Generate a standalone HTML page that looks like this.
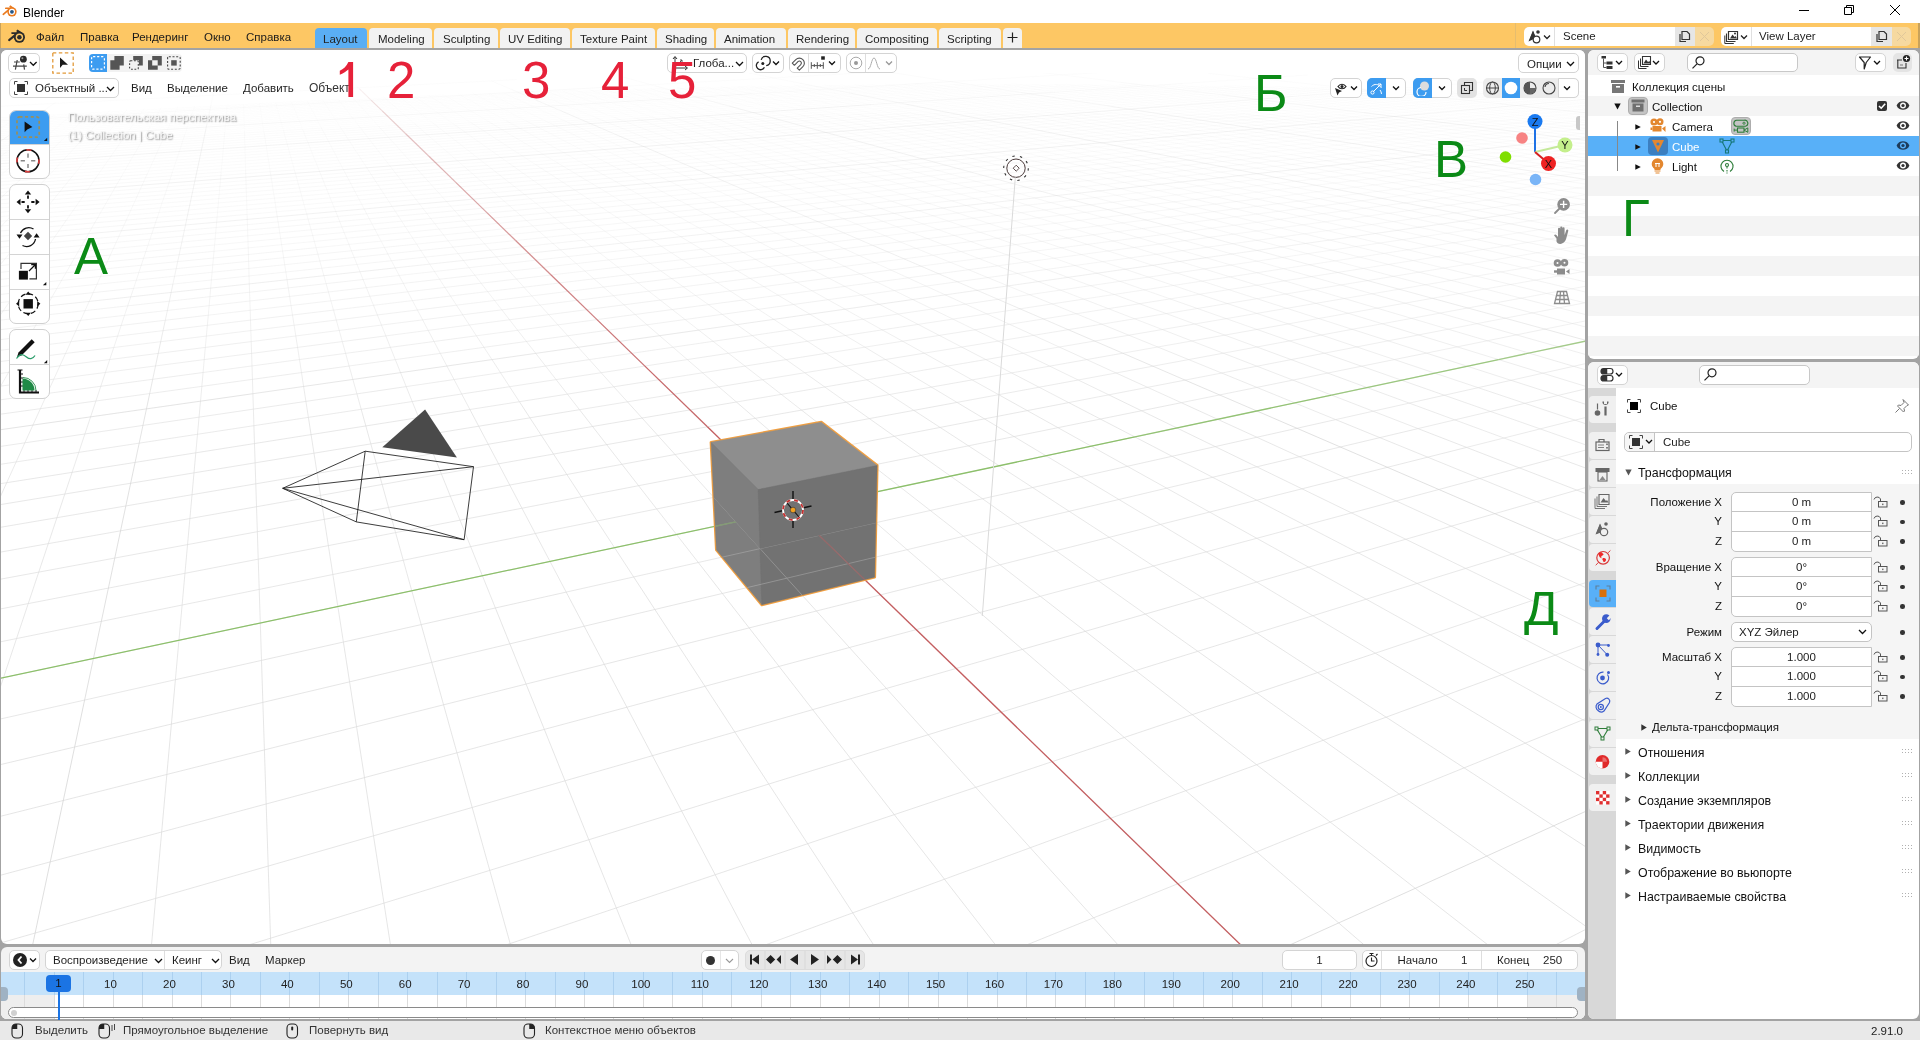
<!DOCTYPE html>
<html><head><meta charset="utf-8">
<style>
*{box-sizing:border-box;margin:0;padding:0}
html,body{width:1920px;height:1040px;overflow:hidden;will-change:transform;background:#a3a3a3;font-family:"Liberation Sans",sans-serif;font-size:11.5px;color:#000}
.a{position:absolute}
.t{position:absolute;white-space:pre;line-height:1}
#title{left:0;top:0;width:1920px;height:23px;background:#fff}
#menubar{left:0;top:23px;width:1920px;height:25px;background:#fdc764}
#vp{left:1px;top:50px;width:1584px;height:894px;background:#ffffff;border-radius:6px;overflow:hidden}
#outl{left:1588px;top:50px;width:331px;height:309px;background:#fff;border-radius:6px;overflow:hidden}
#props{left:1588px;top:362px;width:331px;height:657px;background:#fff;border-radius:6px;overflow:hidden}
#tl{left:1px;top:947px;width:1584px;height:72px;background:#f3f3f3;border-radius:6px;overflow:hidden}
#status{left:0;top:1021px;width:1920px;height:19px;background:#e9e9e9}
.tab{position:absolute;top:28px;height:20px;background:#f2f2f2;border-radius:4px 4px 0 0;color:#222}
.tab span{position:absolute;top:6px;white-space:pre;line-height:1}
.ann{position:absolute;font-size:51px;line-height:1;white-space:pre}
.red{color:#e62139}
.btn{position:absolute;background:#fff;border:1px solid #d4d4d4;border-radius:5px}
.chev{position:absolute}
.gt{position:absolute;white-space:pre;line-height:1;color:#1f1f1f}
.grn{color:#0b8a16}
</style></head><body>
<div id="title" class="a">
  <svg class="a" style="left:0;top:0" width="20" height="20" viewBox="0 0 20 20"><path d="M9.2 6.6L10.4 5.3L14 8L11 8.6z" fill="#ea7a1e"/><rect x="5" y="7.6" width="5.6" height="1.5" rx="0.7" fill="#ea7a1e"/><path d="M3.3 14.3L8.6 9.9" stroke="#ea7a1e" stroke-width="1.7" stroke-linecap="round"/><circle cx="11.94" cy="11.86" r="4.7" fill="#ea7a1e"/><circle cx="11.94" cy="11.86" r="3.1" fill="#fff"/><circle cx="11.94" cy="11.86" r="1.9" fill="#265787"/></svg>
  <span class="t" style="left:23px;top:6.5px;font-size:12px;color:#000">Blender</span>
  <div class="a" style="left:1799px;top:10px;width:10px;height:1px;background:#000"></div>
  <svg class="a" style="left:1843px;top:4px" width="12" height="12" viewBox="0 0 12 12"><path d="M1.5 3.5h7v7h-7z M3.5 3.5V1.5h7v7h-2" fill="none" stroke="#000" stroke-width="1"/></svg>
  <svg class="a" style="left:1889px;top:4px" width="12" height="12" viewBox="0 0 12 12"><path d="M1 1L11 11M11 1L1 11" stroke="#000" stroke-width="1"/></svg>
</div>
<div id="menubar" class="a">
  <div class="a" style="left:0;top:0;width:1px;height:25px;background:#c9a25a"></div>
  <svg class="a" style="left:0;top:0" width="30" height="25" viewBox="0 0 30 25"><g transform="translate(5.19 0.09) scale(1.19)"><path d="M9.2 6.6L10.4 5.3L14 8L11 8.6z" fill="#2b2b2b"/><rect x="5" y="7.6" width="5.6" height="1.5" rx="0.7" fill="#2b2b2b"/><path d="M3.3 14.3L8.6 9.9" stroke="#2b2b2b" stroke-width="1.7" stroke-linecap="round"/><circle cx="11.94" cy="11.86" r="4.7" fill="#2b2b2b"/><circle cx="11.94" cy="11.86" r="3.1" fill="#fdc764"/><circle cx="11.94" cy="11.86" r="1.9" fill="#2b2b2b"/></g></svg>
  <span class="t" style="left:36px;top:8.5px;color:#1a1a1a">Файл</span>
  <span class="t" style="left:80px;top:8.5px;color:#1a1a1a">Правка</span>
  <span class="t" style="left:132px;top:8.5px;color:#1a1a1a">Рендеринг</span>
  <span class="t" style="left:204px;top:8.5px;color:#1a1a1a">Окно</span>
  <span class="t" style="left:246px;top:8.5px;color:#1a1a1a">Справка</span>
</div>
<div class="tab" style="left:315px;width:52px;background:#5aaef4"><span style="left:8px">Layout</span></div>
<div class="tab" style="left:369px;width:63px"><span style="left:9px">Modeling</span></div>
<div class="tab" style="left:434px;width:64px"><span style="left:9px">Sculpting</span></div>
<div class="tab" style="left:500px;width:70px"><span style="left:8px">UV Editing</span></div>
<div class="tab" style="left:572px;width:83px"><span style="left:8px">Texture Paint</span></div>
<div class="tab" style="left:657px;width:57px"><span style="left:8px">Shading</span></div>
<div class="tab" style="left:716px;width:70px"><span style="left:8px">Animation</span></div>
<div class="tab" style="left:788px;width:67px"><span style="left:8px">Rendering</span></div>
<div class="tab" style="left:857px;width:80px"><span style="left:8px">Compositing</span></div>
<div class="tab" style="left:939px;width:62px"><span style="left:8px">Scripting</span></div>
<div class="tab" style="left:1003px;width:19px"><svg class="a" style="left:4px;top:4px" width="11" height="11" viewBox="0 0 11 11"><path d="M5.5 0.5v10M0.5 5.5h10" stroke="#222" stroke-width="1.2"/></svg></div>
<div class="a" style="left:1515px;top:23px;width:1px;height:25px;background:#e6bd6e"></div>
<div class="a" style="left:1524px;top:27px;width:30px;height:19px;background:#fff;border-radius:5px 0 0 5px"></div>
<svg class="a" style="left:1527px;top:29px" width="26" height="15" viewBox="0 0 26 15"><path d="M2 12 L6 2 L8 7" fill="#333"/><path d="M1.5 12.5 L6 1.5 L9 9 Z" fill="#333"/><circle cx="11" cy="3" r="1.8" fill="#333"/><circle cx="9.5" cy="10.5" r="3.3" fill="#fff" stroke="#333" stroke-width="1.2"/><path d="M17 6.5 l3 3 l3 -3" fill="none" stroke="#222" stroke-width="1.3"/></svg>
<div class="a" style="left:1554px;top:27px;width:121px;height:19px;background:#fff;border-left:1px solid #e0e0e0"></div>
<span class="t" style="left:1563px;top:31px;color:#222">Scene</span>
<div class="a" style="left:1675px;top:27px;width:20px;height:19px;background:#e6e6e6"></div>
<svg class="a" style="left:1677px;top:29px" width="16" height="15" viewBox="0 0 16 15"><path d="M5 2.5h5l2.5 2.5v5.5h-7.5z" fill="none" stroke="#333" stroke-width="1.2"/><path d="M3 5v7.5h6" fill="none" stroke="#333" stroke-width="1.2"/></svg>
<div class="a" style="left:1695px;top:27px;width:19px;height:19px;background:#f6d9a0;border-radius:0 5px 5px 0"></div>
<svg class="a" style="left:1699px;top:31px" width="11" height="11" viewBox="0 0 11 11"><path d="M1 1L10 10M10 1L1 10" stroke="#e0c79a" stroke-width="1"/></svg>
<div class="a" style="left:1721px;top:27px;width:30px;height:19px;background:#fff;border-radius:5px 0 0 5px"></div>
<svg class="a" style="left:1724px;top:29px" width="26" height="15" viewBox="0 0 26 15"><path d="M4.5 2.5h9v8h-9z" fill="none" stroke="#333" stroke-width="1.2"/><path d="M2.5 4.5v8h9" fill="none" stroke="#333" stroke-width="1.1"/><path d="M0.8 6.5v8h9" fill="none" stroke="#333" stroke-width="1"/><path d="M6 9.5 l2.5-4 l2 2.5 l1-1 l1.5 2.5z" fill="#333"/><circle cx="11" cy="4.5" r="1" fill="#333"/><path d="M17 6.5 l3 3 l3 -3" fill="none" stroke="#222" stroke-width="1.3"/></svg>
<div class="a" style="left:1751px;top:27px;width:120px;height:19px;background:#fff;border-left:1px solid #e0e0e0"></div>
<span class="t" style="left:1759px;top:31px;color:#222">View Layer</span>
<div class="a" style="left:1871px;top:27px;width:21px;height:19px;background:#e6e6e6"></div>
<svg class="a" style="left:1874px;top:29px" width="16" height="15" viewBox="0 0 16 15"><path d="M5 2.5h5l2.5 2.5v5.5h-7.5z" fill="none" stroke="#333" stroke-width="1.2"/><path d="M3 5v7.5h6" fill="none" stroke="#333" stroke-width="1.2"/></svg>
<div class="a" style="left:1892px;top:27px;width:19px;height:19px;background:#f6d9a0;border-radius:0 5px 5px 0"></div>
<svg class="a" style="left:1896px;top:31px" width="11" height="11" viewBox="0 0 11 11"><path d="M1 1L10 10M10 1L1 10" stroke="#e0c79a" stroke-width="1"/></svg>
<div class="a" style="left:1918px;top:23px;width:2px;height:25px;background:#c9a25a"></div>

<div id="vp" class="a">
<svg class="a" style="left:-1px;top:-50px" width="1920" height="1040" viewBox="0 0 1920 1040"><defs><clipPath id="cb"><polygon points="713.8,497.4 760.1,548.7 875.9,522.7 874.7,577.2 761.8,604.8 716.4,549.9"/></clipPath></defs><g fill="none" stroke-width="1"><path stroke="#dcdcdc" stroke-opacity="0.058" d="M-19.4 118.9L338.1 99.3M-22.5 120.7L444.1 94.9M-9.5 123.3L576.0 90.3M-12.6 125.2L620.1 89.2M-15.7 127.1L663.9 88.2M-19.0 129.1L707.4 87.1M-22.3 131.1L750.6 86.1M-5.1 132.0L781.0 85.8M-8.3 134.1L811.6 85.4M-11.6 136.3L842.2 85.1M-15.0 138.5L872.9 84.8M-22.1 143.2L934.4 84.2M-25.8 145.6L965.3 83.9M184.9 134.6L984.6 84.3M321.5 128.1L1015.8 84.0M415.1 124.2L1035.5 84.4M488.6 121.6L1066.9 84.1M543.7 120.1L1087.1 84.5M598.4 118.7L1107.5 84.9M652.6 117.2L1139.4 84.6M744.0 115.4L1181.3 85.4M781.8 115.1L1202.6 85.9M835.0 113.7L1235.3 85.6M872.8 113.3L1257.1 86.0M910.7 113.0L1279.2 86.4M948.8 112.6L1301.5 86.9M972.5 113.3L1324.1 87.4M1010.9 113.0L1347.0 87.8M1049.5 112.6L1370.2 88.3M1113.1 113.0L1417.4 89.3M1138.5 113.7L1430.8 90.6M1177.9 113.4L1455.3 91.1M1203.9 114.1L1480.0 91.6M1243.8 113.8L1505.0 92.1M1270.5 114.5L1530.4 92.7M1297.6 115.3L1556.1 93.2M1325.1 116.0L1571.8 94.6M1366.1 115.7L1598.2 95.2M1423.1 117.3L1599.7 101.1M1452.3 118.1L1595.0 104.8M1481.9 118.9L1601.3 107.6M1511.9 119.7L1596.4 111.6M1542.5 120.6L1591.2 115.8M1573.5 121.4L1598.0 119.0M-0.6 117.9L-6.4 121.4M18.0 116.9L-5.1 132.0M54.7 114.9L18.6 142.8M72.7 113.9L40.4 141.5M90.6 112.9L61.9 140.1M109.8 110.3L83.1 138.8M127.1 109.4L102.3 139.8M144.2 108.4L123.3 138.5M161.2 107.5L144.1 137.1M177.9 106.6L164.6 135.9M194.6 105.7L184.9 134.6M227.2 105.4L224.8 132.1M243.5 104.5L244.4 130.8M259.7 103.6L264.0 131.7M275.7 102.7L283.4 130.5M291.5 101.9L302.6 129.3M307.2 101.0L321.5 128.1M322.7 100.1L340.2 126.9M338.1 99.3L358.7 125.7M353.4 98.5L378.8 126.5M383.5 96.8L415.1 124.2M400.0 97.3L433.0 123.1M414.8 96.5L453.4 123.9M429.5 95.7L471.1 122.7M444.1 94.9L488.6 121.6M458.5 94.1L505.9 120.5M472.8 93.3L526.6 121.2M489.5 93.8L543.7 120.1M503.7 93.0L560.6 119.0M531.6 91.4L598.4 118.7M548.6 91.9L614.9 117.6M562.4 91.1L636.3 118.3M576.0 90.3L652.6 117.2M589.5 89.6L668.8 116.1M606.7 90.0L690.4 116.9M620.1 89.2L706.3 115.8M633.4 88.5L728.3 116.5M650.7 88.9L744.0 115.4M676.9 87.4L781.8 115.1M694.4 87.9L797.3 114.0M707.4 87.1L819.8 114.7M720.2 86.4L835.0 113.7M737.9 86.8L857.8 114.4M750.6 86.1L872.8 113.3M768.5 86.5L895.9 114.0M781.0 85.8L910.7 113.0M793.5 85.0L934.1 113.7M823.9 84.7L972.5 113.3M842.2 85.1L986.9 112.3M854.4 84.4L1010.9 113.0M872.9 84.8L1035.3 113.7M884.9 84.1L1049.5 112.6M903.6 84.5L1074.2 113.4M915.5 83.8L1088.2 112.3M934.4 84.2L1113.1 113.0M953.5 84.6L1138.5 113.7M984.6 84.3L1177.9 113.4M1004.1 84.7L1203.9 114.1M1015.8 84.0L1230.3 114.9M1035.5 84.4L1243.8 113.8M1055.4 84.8L1270.5 114.5M1066.9 84.1L1297.6 115.3M1087.1 84.5L1325.1 116.0M1107.5 84.9L1338.3 114.9M1118.8 84.1L1366.1 115.7M1160.2 85.0L1423.1 117.3M1181.3 85.4L1452.3 118.1M1202.6 85.9L1481.9 118.9M1224.2 86.3L1511.9 119.7M1235.3 85.6L1542.5 120.6M1257.1 86.0L1573.5 121.4M1279.2 86.4L1605.0 122.3M1301.5 86.9L1598.0 119.0M1324.1 87.4L1591.2 115.8M1370.2 88.3L1596.4 111.6M1393.7 88.8L1607.9 110.4M1417.4 89.3L1601.3 107.6M1455.3 91.1L1595.0 104.8M1480.0 91.6L1606.0 103.8M1505.0 92.1L1599.7 101.1M1530.4 92.7L1593.7 98.6M1571.8 94.6L1604.2 97.6"/><path stroke="#dcdcdc" stroke-opacity="0.117" d="M-6.9 146.6L184.9 134.6M-10.5 149.2L321.5 128.1M-14.2 151.8L415.1 124.2M-18.0 154.5L488.6 121.6M-21.8 157.2L543.7 120.1M-25.9 160.1L598.4 118.7M-5.4 161.3L652.6 117.2M-13.2 167.4L744.0 115.4M-17.3 170.6L781.8 115.1M-21.5 173.9L835.0 113.7M-25.9 177.2L872.8 113.3M-3.5 178.8L910.7 113.0M72.2 176.6L948.8 112.6M147.1 174.3L972.5 113.3M221.2 172.1L1010.9 113.0M294.4 169.9L1049.5 112.6M415.7 167.4L1113.1 113.0M487.2 165.3L1138.5 113.7M557.9 163.1L1177.9 113.4M606.7 162.8L1203.9 114.1M655.6 162.4L1243.8 113.8M725.3 160.3L1270.5 114.5M774.3 160.0L1297.6 115.3M823.4 159.6L1325.1 116.0M892.1 157.5L1366.1 115.7M990.7 156.8L1423.1 117.3M1040.2 156.4L1452.3 118.1M1089.9 156.0L1481.9 118.9M1139.9 155.6L1511.9 119.7M1190.0 155.2L1542.5 120.6M1223.2 156.6L1573.5 121.4M1274.0 156.2L1592.6 123.6M1325.0 155.8L1599.7 127.1M1376.2 155.4L1594.1 132.1M1463.6 156.4L1595.7 141.6M18.6 142.8L-5.4 161.3M1515.8 156.0L1603.7 145.9M40.4 141.5L-3.5 178.8M1568.1 155.6L1597.6 152.2M61.9 140.1L23.1 176.9M83.1 138.8L46.0 178.5M102.3 139.8L72.2 176.6M123.3 138.5L98.1 174.7M144.1 137.1L121.6 176.2M164.6 135.9L147.1 174.3M184.9 134.6L172.3 172.5M224.8 132.1L221.2 172.1M244.4 130.8L245.6 170.3M264.0 131.7L270.3 171.8M283.4 130.5L294.4 169.9M302.6 129.3L318.2 168.1M321.5 128.1L343.4 169.6M340.2 126.9L366.8 167.8M358.7 125.7L392.5 169.2M378.8 126.5L415.7 167.4M415.1 124.2L464.7 167.0M433.0 123.1L487.2 165.3M453.4 123.9L509.4 163.5M471.1 122.7L536.1 164.9M488.6 121.6L557.9 163.1M505.9 120.5L585.1 164.5M526.6 121.2L606.7 162.8M543.7 120.1L627.9 161.1M560.6 119.0L655.6 162.4M598.4 118.7L704.7 162.1M614.9 117.6L725.3 160.3M636.3 118.3L754.0 161.7M652.6 117.2L774.3 160.0M668.8 116.1L794.3 158.2M690.4 116.9L823.4 159.6M706.3 115.8L843.1 157.9M728.3 116.5L872.7 159.2M744.0 115.4L892.1 157.5M781.8 115.1L941.3 157.1M797.3 114.0L971.9 158.5M819.8 114.7L990.7 156.8M835.0 113.7L1021.8 158.1M857.8 114.4L1040.2 156.4M872.8 113.3L1071.9 157.7M895.9 114.0L1089.9 156.0M910.7 113.0L1122.1 157.3M934.1 113.7L1139.9 155.6M972.5 113.3L1190.0 155.2M986.9 112.3L1223.2 156.6M1010.9 113.0L1240.2 154.9M1035.3 113.7L1274.0 156.2M1049.5 112.6L1290.7 154.5M1074.2 113.4L1325.0 155.8M1088.2 112.3L1341.4 154.1M1113.1 113.0L1376.2 155.4M1138.5 113.7L1411.7 156.8M1177.9 113.4L1463.6 156.4M1203.9 114.1L1479.2 154.7M1230.3 114.9L1515.8 156.0M1243.8 113.8L1531.0 154.3M1270.5 114.5L1568.1 155.6M1297.6 115.3L1606.0 157.0M1325.1 116.0L1597.6 152.2M1338.3 114.9L1612.0 150.5M1366.1 115.7L1603.7 145.9M1423.1 117.3L1609.4 140.1M1452.3 118.1L1601.6 136.0M1481.9 118.9L1594.1 132.1M1511.9 119.7L1607.1 130.7M1542.5 120.6L1599.7 127.1M1573.5 121.4L1592.6 123.6"/><path stroke="#dcdcdc" stroke-opacity="0.175" d="M-30.4 180.8L-3.5 178.8M-7.7 182.4L72.2 176.6M-12.0 186.1L147.1 174.3M-16.5 189.9L221.2 172.1M-21.2 193.9L294.4 169.9M-31.0 202.2L415.7 167.4M-5.8 204.3L487.2 165.3M-10.6 208.8L557.9 163.1M-15.5 213.5L606.7 162.8M-20.7 218.4L655.6 162.4M-26.1 223.5L725.3 160.3M66.2 220.4L774.3 160.0M157.3 217.4L823.4 159.6M247.1 214.4L892.1 157.5M423.1 208.6L990.7 156.8M509.4 205.7L1040.2 156.4M568.5 205.4L1089.9 156.0M653.5 202.6L1139.9 155.6M712.6 202.2L1190.0 155.2M772.0 201.9L1223.2 156.6M855.5 199.1L1274.0 156.2M915.0 198.7L1325.0 155.8M974.7 198.4L1376.2 155.4M1095.0 197.6L1463.6 156.4M1155.5 197.3L1515.8 156.0M-3.5 178.8L-7.7 182.4M1216.3 196.9L1568.1 155.6M23.1 176.9L-5.8 204.3M1257.0 199.0L1591.1 158.8M46.0 178.5L6.4 220.7M1318.9 198.6L1599.6 164.0M72.2 176.6L34.2 223.1M1381.0 198.3L1592.8 171.4M98.1 174.7L66.2 220.4M1443.5 197.9L1601.9 177.2M121.6 176.2L97.7 217.7M1506.2 197.5L1594.8 185.6M147.1 174.3L126.3 220.1M1551.1 199.7L1604.5 192.3M172.3 172.5L157.3 217.4M221.2 172.1L217.1 217.1M245.6 170.3L247.1 214.4M270.3 171.8L276.5 211.8M294.4 169.9L306.7 214.1M318.2 168.1L335.7 211.5M343.4 169.6L364.1 208.9M366.8 167.8L395.2 211.2M392.5 169.2L423.1 208.6M415.7 167.4L450.6 206.1M464.7 167.0L509.4 205.7M487.2 165.3L541.9 207.9M509.4 163.5L568.5 205.4M536.1 164.9L594.6 202.9M557.9 163.1L627.8 205.1M585.1 164.5L653.5 202.6M606.7 162.8L687.5 204.7M627.9 161.1L712.6 202.2M655.6 162.4L737.4 199.8M704.7 162.1L796.3 199.4M725.3 160.3L831.7 201.5M754.0 161.7L855.5 199.1M774.3 160.0L891.6 201.2M794.3 158.2L915.0 198.7M823.4 159.6L951.8 200.8M843.1 157.9L974.7 198.4M872.7 159.2L1012.3 200.5M892.1 157.5L1034.7 198.0M941.3 157.1L1095.0 197.6M971.9 158.5L1134.1 199.7M990.7 156.8L1155.5 197.3M1021.8 158.1L1195.4 199.4M1040.2 156.4L1216.3 196.9M1071.9 157.7L1257.0 199.0M1089.9 156.0L1277.4 196.5M1122.1 157.3L1318.9 198.6M1139.9 155.6L1338.8 196.2M1190.0 155.2L1424.3 200.4M1223.2 156.6L1443.5 197.9M1240.2 154.9L1487.5 200.0M1274.0 156.2L1506.2 197.5M1290.7 154.5L1551.1 199.7M1325.0 155.8L1569.2 197.1M1341.4 154.1L1614.9 199.3M1376.2 155.4L1604.5 192.3M1411.7 156.8L1594.8 185.6M1463.6 156.4L1601.9 177.2M1479.2 154.7L1592.8 171.4M1515.8 156.0L1608.6 169.4M1531.0 154.3L1599.6 164.0M1568.1 155.6L1591.1 158.8"/><path stroke="#dcdcdc" stroke-opacity="0.233" d="M-31.7 228.8L66.2 220.4M-37.5 234.3L157.3 217.4M-8.8 237.0L247.1 214.4M-20.1 249.1L423.1 208.6M-26.2 255.6L509.4 205.7M5.1 258.8L568.5 205.4M110.4 255.0L653.5 202.6M214.0 251.3L712.6 202.2M316.1 247.7L772.0 201.9M416.6 244.1L855.5 199.1M484.6 243.8L915.0 198.7M583.4 240.2L974.7 198.4M748.5 236.4L1095.0 197.6M816.7 236.1L1155.5 197.3M885.3 235.8L1216.3 196.9M954.2 235.4L1257.0 199.0M6.4 220.7L-8.8 237.0M1023.5 235.1L1318.9 198.6M34.2 223.1L5.1 258.8M1093.1 234.8L1381.0 198.3M66.2 220.4L41.9 255.3M1163.1 234.5L1443.5 197.9M97.7 217.7L74.2 258.5M1233.5 234.1L1506.2 197.5M126.3 220.1L110.4 255.0M1304.2 233.8L1551.1 199.7M157.3 217.4L145.8 251.6M1424.8 236.4L1607.5 209.5M217.1 217.1L214.0 251.3M1497.3 236.1L1599.5 220.5M247.1 214.4L248.2 247.9M1570.2 235.7L1590.8 232.5M276.5 211.8L282.6 251.0M306.7 214.1L316.1 247.7M335.7 211.5L348.9 244.4M364.1 208.9L384.4 247.4M395.2 211.2L416.6 244.1M423.1 208.6L453.0 247.1M450.6 206.1L484.6 243.8M509.4 205.7L553.0 243.5M541.9 207.9L583.4 240.2M568.5 205.4L613.1 237.0M594.6 202.9L651.5 239.9M627.8 205.1L680.7 236.7M653.5 202.6L720.0 239.6M687.5 204.7L748.5 236.4M712.6 202.2L788.8 239.3M737.4 199.8L816.7 236.1M796.3 199.4L885.3 235.8M831.7 201.5L912.0 232.6M855.5 199.1L954.2 235.4M891.6 201.2L980.3 232.3M915.0 198.7L1023.5 235.1M951.8 200.8L1048.9 232.0M974.7 198.4L1093.1 234.8M1012.3 200.5L1117.9 231.6M1034.7 198.0L1163.1 234.5M1095.0 197.6L1233.5 234.1M1134.1 199.7L1280.8 237.1M1155.5 197.3L1304.2 233.8M1195.4 199.4L1352.6 236.7M1216.3 196.9L1375.3 233.5M1257.0 199.0L1424.8 236.4M1277.4 196.5L1446.7 233.2M1318.9 198.6L1497.3 236.1M1338.8 196.2L1518.6 232.8M1424.3 200.4L1590.8 232.5M1443.5 197.9L1611.0 229.3M1487.5 200.0L1599.5 220.5M1506.2 197.5L1618.8 217.6M1551.1 199.7L1607.5 209.5M1569.2 197.1L1597.0 201.8"/><path stroke="#dcdcdc" stroke-opacity="0.292" d="M-32.5 262.3L5.1 258.8M-39.2 269.4L110.4 255.0M-6.5 273.0L214.0 251.3M-12.8 280.7L316.1 247.7M-19.4 288.7L416.6 244.1M15.8 292.8L484.6 243.8M133.6 288.3L583.4 240.2M363.1 279.5L748.5 236.4M474.9 275.2L816.7 236.1M551.1 275.0L885.3 235.8M660.7 270.8L954.2 235.4M737.0 270.5L1023.5 235.1M5.1 258.8L-6.5 273.0M813.7 270.3L1093.1 234.8M41.9 255.3L15.8 292.8M920.9 266.1L1163.1 234.5M74.2 258.5L56.9 288.5M997.7 265.8L1233.5 234.1M110.4 255.0L93.2 292.6M1075.0 265.5L1304.2 233.8M145.8 251.6L133.6 288.3M1230.8 265.0L1424.8 236.4M214.0 251.3L210.7 288.1M1283.5 268.7L1497.3 236.1M248.2 247.9L249.3 283.9M1363.4 268.4L1570.2 235.7M282.6 251.0L287.0 279.7M1443.8 268.1L1602.5 242.1M316.1 247.7L326.1 283.7M1524.6 267.9L1593.2 256.2M348.9 244.4L363.1 279.5M1582.9 271.7L1606.0 267.6M384.4 247.4L399.2 275.5M416.6 244.1L439.6 279.3M453.0 247.1L474.9 275.2M484.6 243.8L509.5 271.3M553.0 243.5L584.9 271.0M583.4 240.2L627.7 274.7M613.1 237.0L660.7 270.8M651.5 239.9L704.8 274.5M680.7 236.7L737.0 270.5M720.0 239.6L768.6 266.6M748.5 236.4L813.7 270.3M788.8 239.3L844.5 266.3M816.7 236.1L890.9 270.0M885.3 235.8L968.5 269.7M912.0 232.6L997.7 265.8M954.2 235.4L1046.6 269.5M980.3 232.3L1075.0 265.5M1023.5 235.1L1125.1 269.2M1048.9 232.0L1152.7 265.3M1093.1 234.8L1204.1 268.9M1117.9 231.6L1230.8 265.0M1163.1 234.5L1283.5 268.7M1233.5 234.1L1363.4 268.4M1280.8 237.1L1388.5 264.4M1304.2 233.8L1443.8 268.1M1352.6 236.7L1500.7 271.9M1375.3 233.5L1524.6 267.9M1424.8 236.4L1582.9 271.7M1446.7 233.2L1606.0 267.6M1497.3 236.1L1593.2 256.2M1518.6 232.8L1615.0 252.5"/><path stroke="#dcdcdc" stroke-opacity="0.350" d="M-26.3 297.2L15.8 292.8M-33.6 306.2L133.6 288.3M-49.5 325.7L363.1 279.5M80.6 320.4L474.9 275.2M208.3 315.2L551.1 275.0M333.5 310.1L660.7 270.8M456.5 305.2L737.0 270.5M540.0 305.0L813.7 270.3M15.8 292.8L-3.5 320.5M660.2 300.1L920.9 266.1M56.9 288.5L35.5 325.6M743.9 299.9L997.7 265.8M93.2 292.6L80.6 320.4M828.0 299.7L1075.0 265.5M133.6 288.3L124.5 315.4M998.0 299.3L1230.8 265.0M210.7 288.1L208.3 315.2M1083.7 299.1L1283.5 268.7M249.3 283.9L250.2 310.3M1170.1 298.9L1363.4 268.4M287.0 279.7L292.5 315.1M1256.9 298.7L1443.8 268.1M326.1 283.7L333.5 310.1M1344.4 298.5L1524.6 267.9M363.1 279.5L373.5 305.3M1432.4 298.3L1582.9 271.7M399.2 275.5L417.4 310.0M1521.0 298.2L1596.0 284.3M439.6 279.3L456.5 305.2M1584.9 302.8L1610.1 297.9M474.9 275.2L501.8 309.8M509.5 271.3L540.0 305.0M584.9 271.0L624.0 304.8M627.7 274.7L660.2 300.1M660.7 270.8L708.5 304.6M704.8 274.5L743.9 299.9M737.0 270.5L778.3 295.3M768.6 266.6L828.0 299.7M813.7 270.3L861.6 295.1M844.5 266.3L912.7 299.5M890.9 270.0L945.3 294.9M968.5 269.7L1029.6 294.7M997.7 265.8L1083.7 299.1M1046.6 269.5L1114.4 294.5M1075.0 265.5L1170.1 298.9M1125.1 269.2L1199.7 294.3M1152.7 265.3L1256.9 298.7M1204.1 268.9L1285.6 294.0M1230.8 265.0L1344.4 298.5M1283.5 268.7L1372.1 293.8M1363.4 268.4L1494.7 303.0M1388.5 264.4L1521.0 298.2M1443.8 268.1L1584.9 302.8M1500.7 271.9L1610.1 297.9M1524.6 267.9L1596.0 284.3M1582.9 271.7L1619.8 279.9"/><path stroke="#dcdcdc" stroke-opacity="0.408" d="M-10.7 330.9L80.6 320.4M-18.4 341.8L208.3 315.2M-26.5 353.5L333.5 310.1M113.8 347.5L456.5 305.2M251.2 341.6L540.0 305.0M-3.5 320.5L-10.7 330.9M385.8 335.9L660.2 300.1M35.5 325.6L22.9 347.5M476.4 335.8L743.9 299.9M80.6 320.4L65.5 353.5M607.9 330.2L828.0 299.7M124.5 315.4L113.8 347.5M827.1 324.5L998.0 299.3M208.3 315.2L205.3 347.5M918.1 324.4L1083.7 299.1M250.2 310.3L251.2 341.6M1009.6 324.3L1170.1 298.9M292.5 315.1L295.8 336.0M1101.8 324.2L1256.9 298.7M333.5 310.1L342.3 341.6M1194.7 324.0L1344.4 298.5M373.5 305.3L385.8 335.9M1288.2 323.9L1432.4 298.3M417.4 310.0L428.2 330.4M1352.2 329.3L1521.0 298.2M456.5 305.2L476.4 335.8M1448.2 329.2L1584.9 302.8M501.8 309.8L517.7 330.3M1544.9 329.1L1599.4 318.1M540.0 305.0L567.7 335.7M624.0 304.8L647.0 324.8M660.2 300.1L698.7 330.1M708.5 304.6L736.8 324.6M743.9 299.9L790.1 330.0M778.3 295.3L827.1 324.5M828.0 299.7L882.2 329.9M861.6 295.1L918.1 324.4M912.7 299.5L974.9 329.8M945.3 294.9L1009.6 324.3M1029.6 294.7L1101.8 324.2M1083.7 299.1L1162.3 329.5M1114.4 294.5L1194.7 324.0M1170.1 298.9L1256.9 329.4M1199.7 294.3L1288.2 323.9M1256.9 298.7L1352.2 329.3M1285.6 294.0L1382.3 323.8M1344.4 298.5L1448.2 329.2M1372.1 293.8L1477.1 323.7M1494.7 303.0L1615.2 334.8M1521.0 298.2L1599.4 318.1M1584.9 302.8L1625.5 312.8"/><path stroke="#dcdcdc" stroke-opacity="0.467" d="M-35.1 365.9L113.8 347.5M-44.4 379.1L251.2 341.6M53.8 379.2L385.8 335.9M22.9 347.5L0.6 386.2M203.1 372.5L476.4 335.8M65.5 353.5L53.8 379.2M349.1 366.0L607.9 330.2M113.8 347.5L105.4 372.5M589.3 359.6L827.1 324.5M205.3 347.5L203.1 372.5M728.5 353.3L918.1 324.4M251.2 341.6L252.0 366.0M826.0 353.3L1009.6 324.3M295.8 336.0L301.5 372.6M924.2 353.2L1101.8 324.2M342.3 341.6L349.1 366.0M1023.2 353.2L1194.7 324.0M385.8 335.9L395.3 359.6M1122.8 353.2L1288.2 323.9M428.2 330.4L446.9 366.0M1223.3 353.2L1352.2 329.3M476.4 335.8L492.0 359.6M1324.4 353.2L1448.2 329.2M517.7 330.3L535.7 353.3M1426.4 353.1L1544.9 329.1M567.7 335.7L589.3 359.6M647.0 324.8L687.3 359.6M698.7 330.1L728.5 353.3M736.8 324.6L786.1 359.6M790.1 330.0L826.0 353.3M827.1 324.5L864.8 347.1M882.2 329.9L924.2 353.2M918.1 324.4L961.8 347.1M974.9 329.8L1023.2 353.2M1009.6 324.3L1059.4 347.1M1101.8 324.2L1157.8 347.0M1162.3 329.5L1223.3 353.2M1194.7 324.0L1256.9 347.0M1256.9 329.4L1324.4 353.2M1288.2 323.9L1394.5 359.6M1352.2 329.3L1426.4 353.1M1382.3 323.8L1498.6 359.6M1448.2 329.2L1529.0 353.1M1477.1 323.7L1603.5 359.6"/><path stroke="#dcdcdc" stroke-opacity="0.525" d="M-54.2 393.3L53.8 379.2M0.6 386.2L-7.9 400.9M-7.9 400.9L203.1 372.5M53.8 379.2L40.4 408.7M95.9 401.0L349.1 366.0M105.4 372.5L95.9 401.0M406.2 386.6L589.3 359.6M203.1 372.5L200.5 401.2M509.6 386.7L728.5 353.3M252.0 366.0L252.9 393.7M658.9 379.7L826.0 353.3M301.5 372.6L303.6 386.5M762.5 379.7L924.2 353.2M349.1 366.0L356.9 393.8M866.9 379.8L1023.2 353.2M395.3 359.6L406.2 386.6M972.1 379.9L1122.8 353.2M446.9 366.0L461.7 394.0M1078.2 380.0L1223.3 353.2M492.0 359.6L509.6 386.7M1185.1 380.1L1324.4 353.2M535.7 353.3L556.1 379.6M1292.9 380.1L1426.4 353.1M589.3 359.6L613.8 386.8M1511.0 380.3L1603.5 359.6M687.3 359.6L718.9 386.9M728.5 353.3L762.5 379.7M786.1 359.6L804.8 372.8M826.0 353.3L866.9 379.8M864.8 347.1L907.7 372.9M924.2 353.2L972.1 379.9M961.8 347.1L1011.5 372.9M1023.2 353.2L1078.2 380.0M1059.4 347.1L1116.1 373.0M1157.8 347.0L1221.6 373.0M1223.3 353.2L1292.9 380.1M1256.9 347.0L1327.8 373.1M1324.4 353.2L1401.5 380.2M1394.5 359.6L1478.2 387.7M1426.4 353.1L1511.0 380.3M1498.6 359.6L1590.3 387.8M1529.0 353.1L1621.4 380.4"/><path stroke="#dcdcdc" stroke-opacity="0.583" d="M40.4 408.7L6.7 482.7M-16.9 416.6L95.9 401.0M95.9 401.0L72.1 472.3M-37.3 452.0L406.2 386.6M200.5 401.2L195.8 452.8M-48.7 471.8L509.6 386.7M252.9 393.7L253.9 425.7M-61.2 493.4L6.7 482.7M469.9 409.5L658.9 379.7M303.6 386.5L308.4 417.4M579.5 409.7L762.5 379.7M356.9 393.8L361.2 409.3M736.4 402.0L866.9 379.8M406.2 386.6L418.7 417.6M846.2 402.2L972.1 379.9M461.7 394.0L469.9 409.5M957.0 402.4L1078.2 380.0M509.6 386.7L519.4 401.7M1068.7 402.6L1185.1 380.1M556.1 379.6L579.5 409.7M1181.3 402.7L1292.9 380.1M613.8 386.8L627.5 401.9M1335.7 419.6L1511.0 380.3M718.9 386.9L736.4 402.0M1418.0 428.6L1590.3 387.8M762.5 379.7L801.5 410.1M1466.6 447.4L1608.7 411.7M804.8 372.8L846.2 402.2M1557.4 457.7L1594.0 447.8M866.9 379.8L913.9 410.4M907.7 372.9L957.0 402.4M972.1 379.9L998.7 394.7M1011.5 372.9L1068.7 402.6M1078.2 380.0L1108.7 394.8M1116.1 373.0L1181.3 402.7M1221.6 373.0L1335.7 419.6M1292.9 380.1L1418.0 428.6M1327.8 373.1L1557.4 457.7M1401.5 380.2L1594.0 447.8M1478.2 387.7L1629.4 438.4M1511.0 380.3L1608.7 411.7"/><path stroke="#dcdcdc" stroke-opacity="0.642" d="M6.7 482.7L-14.8 529.9M72.1 472.3L-11.2 721.6M195.8 452.8L175.4 679.7M253.9 425.7L261.5 660.4M6.7 482.7L469.9 409.5M308.4 417.4L343.4 642.1M-74.7 516.9L579.5 409.7M361.2 409.3L421.2 624.6M-14.8 529.9L736.4 402.0M418.7 417.6L495.4 608.0M-27.1 557.0L846.2 402.2M469.9 409.5L566.2 592.1M-40.7 586.8L957.0 402.4M519.4 401.7L633.7 577.0M-55.7 619.8L1068.7 402.6M579.5 409.7L698.3 562.5M-72.5 656.6L1181.3 402.7M627.5 401.9L786.8 578.2M-11.2 721.6L175.4 679.7M566.2 592.1L1335.7 419.6M736.4 402.0L941.6 579.5M786.8 578.2L1418.0 428.6M801.5 410.1L1040.4 596.3M941.6 579.5L1466.6 447.4M846.2 402.2L1145.3 614.1M1040.4 596.3L1557.4 457.7M913.9 410.4L1256.7 633.1M1202.3 597.7L1615.5 479.0M957.0 402.4L1375.3 653.2M1256.7 633.1L1599.0 527.1M998.7 394.7L1582.9 719.8M1375.3 653.2L1624.5 569.6M1068.7 402.6L1637.3 697.7M1501.9 674.7L1605.9 636.6M1108.7 394.8L1605.9 636.6M1582.9 719.8L1637.3 697.7M1181.3 402.7L1654.1 618.9M1335.7 419.6L1599.0 527.1M1418.0 428.6L1639.8 514.5M1557.4 457.7L1615.5 479.0"/><path stroke="#dcdcdc" stroke-opacity="0.700" d="M175.4 679.7L148.7 975.9M261.5 660.4L273.3 1023.1M343.4 642.1L396.2 981.8M421.2 624.6L534.2 1029.7M495.4 608.0L648.5 987.8M566.2 592.1L800.5 1036.5M633.7 577.0L905.6 993.9M698.3 562.5L1003.0 954.5M786.8 578.2L1167.9 1000.1M175.4 679.7L566.2 592.1M941.6 579.5L1435.3 1006.5M-27.8 771.3L786.8 578.2M1040.4 596.3L1514.7 965.8M-46.8 828.2L941.6 579.5M1145.3 614.1L1708.0 1012.9M-68.7 893.8L1040.4 596.3M1256.7 633.1L1656.8 893.0M-94.2 970.2L1202.3 597.7M1375.3 653.2L1616.1 797.6M148.7 975.9L1256.7 633.1M1582.9 719.8L1674.9 771.0M396.2 981.8L1375.3 653.2M648.5 987.8L1501.9 674.7M1003.0 954.5L1582.9 719.8M1514.7 965.8L1656.8 893.0"/><path stroke="#d4d4d4" stroke-opacity="0.062" d="M-14.1 107.0L516.8 79.6M612.4 86.9L885.9 71.6M950.7 81.6L1113.5 71.7M1182.4 83.5L1307.6 75.0M1393.7 88.8L1505.3 80.2M55.9 102.1L36.5 115.9M213.6 92.8L211.0 104.8M356.1 85.5L367.1 96.3M491.5 80.9L512.1 89.7M620.9 76.4L655.4 85.9M749.3 73.1L800.1 83.2M885.9 71.6L950.7 81.6M1031.1 71.0L1120.8 82.3M1208.0 73.3L1334.9 86.6M1425.0 77.9L1592.5 92.8"/><path stroke="#d4d4d4" stroke-opacity="0.125" d="M-6.4 121.4L612.4 86.9M751.3 93.8L950.7 81.6M1054.8 92.2L1182.4 83.5M1292.8 96.5L1393.7 88.8M1527.7 104.5L1593.7 98.6M36.5 115.9L18.3 128.8M211.0 104.8L208.7 115.9M367.1 96.3L377.3 106.2M512.1 89.7L536.2 100.2M655.4 85.9L686.7 94.4M800.1 83.2L848.8 92.8M950.7 81.6L1021.4 92.5M1120.8 82.3L1222.0 94.9M1334.9 86.6L1500.2 103.8"/><path stroke="#d4d4d4" stroke-opacity="0.188" d="M-18.5 140.8L751.3 93.8M870.9 104.6L1054.8 92.2M1169.1 106.1L1292.8 96.5M1419.9 114.2L1527.7 104.5M18.3 128.8L-3.5 144.2M208.7 115.9L205.9 129.1M377.3 106.2L389.3 117.8M536.2 100.2L561.1 110.9M686.7 94.4L729.0 106.0M848.8 92.8L906.7 104.3M1021.4 92.5L1107.5 105.8M1222.0 94.9L1364.1 112.7M1500.2 103.8L1603.1 114.6"/><path stroke="#d4d4d4" stroke-opacity="0.250" d="M-9.2 164.3L870.9 104.6M859.5 129.9L1169.1 106.1M1197.1 134.2L1419.9 114.2M1488.9 148.3L1601.6 136.0M-3.5 144.2L-6.9 146.6M205.9 129.1L199.7 158.3M389.3 117.8L415.4 143.2M561.1 110.9L615.3 134.3M729.0 106.0L817.6 130.2M906.7 104.3L1039.7 130.6M1107.5 105.8L1319.1 138.3M1364.1 112.7L1595.7 141.6"/><path stroke="#d4d4d4" stroke-opacity="0.312" d="M-26.0 198.0L859.5 129.9M-14.3 242.9L1197.1 134.2M395.2 267.9L1488.9 148.3M1206.0 257.7L1597.0 201.8M199.7 158.3L172.9 284.1M415.4 143.2L528.8 253.3M615.3 134.3L872.6 245.3M817.6 130.2L1309.4 264.7M1039.7 130.6L1602.5 242.1M1319.1 138.3L1611.6 183.4"/><path stroke="#d4d4d4" stroke-opacity="0.375" d="M-41.3 315.7L395.2 267.9M912.7 299.5L1206.0 257.7M172.9 284.1L165.3 320.3M528.8 253.3L577.1 300.3M872.6 245.3L998.0 299.3M1309.4 264.7L1432.4 298.3"/><path stroke="#d4d4d4" stroke-opacity="0.438" d="M698.7 330.1L912.7 299.5M165.3 320.3L160.7 341.7M577.1 300.3L607.9 330.2M998.0 299.3L1068.3 329.7M1432.4 298.3L1544.9 329.1"/><path stroke="#d4d4d4" stroke-opacity="0.500" d="M492.0 359.6L698.7 330.1M160.7 341.7L152.7 379.3M1529.0 353.1L1615.2 334.8M607.9 330.2L631.7 353.3M1068.3 329.7L1122.8 353.2M1544.9 329.1L1632.5 353.1"/><path stroke="#d4d4d4" stroke-opacity="0.562" d="M252.9 393.7L492.0 359.6M152.7 379.3L149.7 393.6M1401.5 380.2L1529.0 353.1M631.7 353.3L658.9 379.7M1122.8 353.2L1185.1 380.1"/><path stroke="#d4d4d4" stroke-opacity="0.625" d="M-26.7 433.6L252.9 393.7M149.7 393.6L135.1 462.4M1256.9 411.0L1401.5 380.2M658.9 379.7L690.0 409.9M1185.1 380.1L1256.9 411.0"/><path stroke="#d4d4d4" stroke-opacity="0.688" d="M135.1 462.4L84.6 700.1M-91.2 697.8L1256.9 411.0M690.0 409.9L848.3 563.7M1256.9 411.0L1624.5 569.6"/><path stroke="#d4d4d4" stroke-opacity="0.750" d="M84.6 700.1L17.4 1016.6M848.3 563.7L1256.4 960.1M1256.4 960.1L1616.1 797.6"/></g><g fill="none" stroke-width="1.3"><path stroke="#c45e60" stroke-opacity="0.083" d="M359.5 88.9L371.3 100.4"/><path stroke="#c45e60" stroke-opacity="0.167" d="M371.3 100.4L382.2 110.9"/><path stroke="#c45e60" stroke-opacity="0.250" d="M382.2 110.9L405.7 133.8"/><path stroke="#c45e60" stroke-opacity="0.333" d="M405.7 133.8L429.2 156.5"/><path stroke="#c45e60" stroke-opacity="0.417" d="M429.2 156.5L456.3 182.9"/><path stroke="#c45e60" stroke-opacity="0.500" d="M456.3 182.9L487.4 213.1"/><path stroke="#c45e60" stroke-opacity="0.583" d="M487.4 213.1L515.6 240.5"/><path stroke="#c45e60" stroke-opacity="0.667" d="M515.6 240.5L551.1 275.0"/><path stroke="#c45e60" stroke-opacity="0.750" d="M551.1 275.0L597.0 319.6"/><path stroke="#c45e60" stroke-opacity="0.833" d="M597.0 319.6L644.9 366.1"/><path stroke="#c45e60" stroke-opacity="0.917" d="M644.9 366.1L707.4 426.8"/><path stroke="#c45e60" stroke-opacity="1.000" d="M707.4 426.8L1256.4 960.1"/><path stroke="#8cc06a" stroke-opacity="0.750" d="M1498.6 359.6L1615.2 334.8"/><path stroke="#8cc06a" stroke-opacity="0.833" d="M1331.5 395.1L1498.6 359.6"/><path stroke="#8cc06a" stroke-opacity="0.917" d="M1134.9 436.9L1331.5 395.1"/><path stroke="#8cc06a" stroke-opacity="1.000" d="M-91.2 697.8L1134.9 436.9"/></g><polygon points="716.4,549.9 711.0,442.3 821.3,422.2 877.2,465.4 874.7,577.2 761.8,604.8" fill="#787878" stroke="#f3a040" stroke-width="2.8" stroke-linejoin="round"/><polygon points="711.0,442.3 758.2,489.5 877.2,465.4 821.3,422.2" fill="#8e8e8e" stroke="#8e8e8e" stroke-width="0.4"/><polygon points="711.0,442.3 758.2,489.5 761.8,604.8 716.4,549.9" fill="#7e7e7e" stroke="#7e7e7e" stroke-width="0.4"/><polygon points="758.2,489.5 877.2,465.4 874.7,577.2 761.8,604.8" fill="#727272" stroke="#727272" stroke-width="0.4"/><g clip-path="url(#cb)" opacity="0.45"><g fill="none" stroke-width="1"><path stroke="#dcdcdc" stroke-opacity="0.058" d="M-19.4 118.9L338.1 99.3M-22.5 120.7L444.1 94.9M-9.5 123.3L576.0 90.3M-12.6 125.2L620.1 89.2M-15.7 127.1L663.9 88.2M-19.0 129.1L707.4 87.1M-22.3 131.1L750.6 86.1M-5.1 132.0L781.0 85.8M-8.3 134.1L811.6 85.4M-11.6 136.3L842.2 85.1M-15.0 138.5L872.9 84.8M-22.1 143.2L934.4 84.2M-25.8 145.6L965.3 83.9M184.9 134.6L984.6 84.3M321.5 128.1L1015.8 84.0M415.1 124.2L1035.5 84.4M488.6 121.6L1066.9 84.1M543.7 120.1L1087.1 84.5M598.4 118.7L1107.5 84.9M652.6 117.2L1139.4 84.6M744.0 115.4L1181.3 85.4M781.8 115.1L1202.6 85.9M835.0 113.7L1235.3 85.6M872.8 113.3L1257.1 86.0M910.7 113.0L1279.2 86.4M948.8 112.6L1301.5 86.9M972.5 113.3L1324.1 87.4M1010.9 113.0L1347.0 87.8M1049.5 112.6L1370.2 88.3M1113.1 113.0L1417.4 89.3M1138.5 113.7L1430.8 90.6M1177.9 113.4L1455.3 91.1M1203.9 114.1L1480.0 91.6M1243.8 113.8L1505.0 92.1M1270.5 114.5L1530.4 92.7M1297.6 115.3L1556.1 93.2M1325.1 116.0L1571.8 94.6M1366.1 115.7L1598.2 95.2M1423.1 117.3L1599.7 101.1M1452.3 118.1L1595.0 104.8M1481.9 118.9L1601.3 107.6M1511.9 119.7L1596.4 111.6M1542.5 120.6L1591.2 115.8M1573.5 121.4L1598.0 119.0M-0.6 117.9L-6.4 121.4M18.0 116.9L-5.1 132.0M54.7 114.9L18.6 142.8M72.7 113.9L40.4 141.5M90.6 112.9L61.9 140.1M109.8 110.3L83.1 138.8M127.1 109.4L102.3 139.8M144.2 108.4L123.3 138.5M161.2 107.5L144.1 137.1M177.9 106.6L164.6 135.9M194.6 105.7L184.9 134.6M227.2 105.4L224.8 132.1M243.5 104.5L244.4 130.8M259.7 103.6L264.0 131.7M275.7 102.7L283.4 130.5M291.5 101.9L302.6 129.3M307.2 101.0L321.5 128.1M322.7 100.1L340.2 126.9M338.1 99.3L358.7 125.7M353.4 98.5L378.8 126.5M383.5 96.8L415.1 124.2M400.0 97.3L433.0 123.1M414.8 96.5L453.4 123.9M429.5 95.7L471.1 122.7M444.1 94.9L488.6 121.6M458.5 94.1L505.9 120.5M472.8 93.3L526.6 121.2M489.5 93.8L543.7 120.1M503.7 93.0L560.6 119.0M531.6 91.4L598.4 118.7M548.6 91.9L614.9 117.6M562.4 91.1L636.3 118.3M576.0 90.3L652.6 117.2M589.5 89.6L668.8 116.1M606.7 90.0L690.4 116.9M620.1 89.2L706.3 115.8M633.4 88.5L728.3 116.5M650.7 88.9L744.0 115.4M676.9 87.4L781.8 115.1M694.4 87.9L797.3 114.0M707.4 87.1L819.8 114.7M720.2 86.4L835.0 113.7M737.9 86.8L857.8 114.4M750.6 86.1L872.8 113.3M768.5 86.5L895.9 114.0M781.0 85.8L910.7 113.0M793.5 85.0L934.1 113.7M823.9 84.7L972.5 113.3M842.2 85.1L986.9 112.3M854.4 84.4L1010.9 113.0M872.9 84.8L1035.3 113.7M884.9 84.1L1049.5 112.6M903.6 84.5L1074.2 113.4M915.5 83.8L1088.2 112.3M934.4 84.2L1113.1 113.0M953.5 84.6L1138.5 113.7M984.6 84.3L1177.9 113.4M1004.1 84.7L1203.9 114.1M1015.8 84.0L1230.3 114.9M1035.5 84.4L1243.8 113.8M1055.4 84.8L1270.5 114.5M1066.9 84.1L1297.6 115.3M1087.1 84.5L1325.1 116.0M1107.5 84.9L1338.3 114.9M1118.8 84.1L1366.1 115.7M1160.2 85.0L1423.1 117.3M1181.3 85.4L1452.3 118.1M1202.6 85.9L1481.9 118.9M1224.2 86.3L1511.9 119.7M1235.3 85.6L1542.5 120.6M1257.1 86.0L1573.5 121.4M1279.2 86.4L1605.0 122.3M1301.5 86.9L1598.0 119.0M1324.1 87.4L1591.2 115.8M1370.2 88.3L1596.4 111.6M1393.7 88.8L1607.9 110.4M1417.4 89.3L1601.3 107.6M1455.3 91.1L1595.0 104.8M1480.0 91.6L1606.0 103.8M1505.0 92.1L1599.7 101.1M1530.4 92.7L1593.7 98.6M1571.8 94.6L1604.2 97.6"/><path stroke="#dcdcdc" stroke-opacity="0.117" d="M-6.9 146.6L184.9 134.6M-10.5 149.2L321.5 128.1M-14.2 151.8L415.1 124.2M-18.0 154.5L488.6 121.6M-21.8 157.2L543.7 120.1M-25.9 160.1L598.4 118.7M-5.4 161.3L652.6 117.2M-13.2 167.4L744.0 115.4M-17.3 170.6L781.8 115.1M-21.5 173.9L835.0 113.7M-25.9 177.2L872.8 113.3M-3.5 178.8L910.7 113.0M72.2 176.6L948.8 112.6M147.1 174.3L972.5 113.3M221.2 172.1L1010.9 113.0M294.4 169.9L1049.5 112.6M415.7 167.4L1113.1 113.0M487.2 165.3L1138.5 113.7M557.9 163.1L1177.9 113.4M606.7 162.8L1203.9 114.1M655.6 162.4L1243.8 113.8M725.3 160.3L1270.5 114.5M774.3 160.0L1297.6 115.3M823.4 159.6L1325.1 116.0M892.1 157.5L1366.1 115.7M990.7 156.8L1423.1 117.3M1040.2 156.4L1452.3 118.1M1089.9 156.0L1481.9 118.9M1139.9 155.6L1511.9 119.7M1190.0 155.2L1542.5 120.6M1223.2 156.6L1573.5 121.4M1274.0 156.2L1592.6 123.6M1325.0 155.8L1599.7 127.1M1376.2 155.4L1594.1 132.1M1463.6 156.4L1595.7 141.6M18.6 142.8L-5.4 161.3M1515.8 156.0L1603.7 145.9M40.4 141.5L-3.5 178.8M1568.1 155.6L1597.6 152.2M61.9 140.1L23.1 176.9M83.1 138.8L46.0 178.5M102.3 139.8L72.2 176.6M123.3 138.5L98.1 174.7M144.1 137.1L121.6 176.2M164.6 135.9L147.1 174.3M184.9 134.6L172.3 172.5M224.8 132.1L221.2 172.1M244.4 130.8L245.6 170.3M264.0 131.7L270.3 171.8M283.4 130.5L294.4 169.9M302.6 129.3L318.2 168.1M321.5 128.1L343.4 169.6M340.2 126.9L366.8 167.8M358.7 125.7L392.5 169.2M378.8 126.5L415.7 167.4M415.1 124.2L464.7 167.0M433.0 123.1L487.2 165.3M453.4 123.9L509.4 163.5M471.1 122.7L536.1 164.9M488.6 121.6L557.9 163.1M505.9 120.5L585.1 164.5M526.6 121.2L606.7 162.8M543.7 120.1L627.9 161.1M560.6 119.0L655.6 162.4M598.4 118.7L704.7 162.1M614.9 117.6L725.3 160.3M636.3 118.3L754.0 161.7M652.6 117.2L774.3 160.0M668.8 116.1L794.3 158.2M690.4 116.9L823.4 159.6M706.3 115.8L843.1 157.9M728.3 116.5L872.7 159.2M744.0 115.4L892.1 157.5M781.8 115.1L941.3 157.1M797.3 114.0L971.9 158.5M819.8 114.7L990.7 156.8M835.0 113.7L1021.8 158.1M857.8 114.4L1040.2 156.4M872.8 113.3L1071.9 157.7M895.9 114.0L1089.9 156.0M910.7 113.0L1122.1 157.3M934.1 113.7L1139.9 155.6M972.5 113.3L1190.0 155.2M986.9 112.3L1223.2 156.6M1010.9 113.0L1240.2 154.9M1035.3 113.7L1274.0 156.2M1049.5 112.6L1290.7 154.5M1074.2 113.4L1325.0 155.8M1088.2 112.3L1341.4 154.1M1113.1 113.0L1376.2 155.4M1138.5 113.7L1411.7 156.8M1177.9 113.4L1463.6 156.4M1203.9 114.1L1479.2 154.7M1230.3 114.9L1515.8 156.0M1243.8 113.8L1531.0 154.3M1270.5 114.5L1568.1 155.6M1297.6 115.3L1606.0 157.0M1325.1 116.0L1597.6 152.2M1338.3 114.9L1612.0 150.5M1366.1 115.7L1603.7 145.9M1423.1 117.3L1609.4 140.1M1452.3 118.1L1601.6 136.0M1481.9 118.9L1594.1 132.1M1511.9 119.7L1607.1 130.7M1542.5 120.6L1599.7 127.1M1573.5 121.4L1592.6 123.6"/><path stroke="#dcdcdc" stroke-opacity="0.175" d="M-30.4 180.8L-3.5 178.8M-7.7 182.4L72.2 176.6M-12.0 186.1L147.1 174.3M-16.5 189.9L221.2 172.1M-21.2 193.9L294.4 169.9M-31.0 202.2L415.7 167.4M-5.8 204.3L487.2 165.3M-10.6 208.8L557.9 163.1M-15.5 213.5L606.7 162.8M-20.7 218.4L655.6 162.4M-26.1 223.5L725.3 160.3M66.2 220.4L774.3 160.0M157.3 217.4L823.4 159.6M247.1 214.4L892.1 157.5M423.1 208.6L990.7 156.8M509.4 205.7L1040.2 156.4M568.5 205.4L1089.9 156.0M653.5 202.6L1139.9 155.6M712.6 202.2L1190.0 155.2M772.0 201.9L1223.2 156.6M855.5 199.1L1274.0 156.2M915.0 198.7L1325.0 155.8M974.7 198.4L1376.2 155.4M1095.0 197.6L1463.6 156.4M1155.5 197.3L1515.8 156.0M-3.5 178.8L-7.7 182.4M1216.3 196.9L1568.1 155.6M23.1 176.9L-5.8 204.3M1257.0 199.0L1591.1 158.8M46.0 178.5L6.4 220.7M1318.9 198.6L1599.6 164.0M72.2 176.6L34.2 223.1M1381.0 198.3L1592.8 171.4M98.1 174.7L66.2 220.4M1443.5 197.9L1601.9 177.2M121.6 176.2L97.7 217.7M1506.2 197.5L1594.8 185.6M147.1 174.3L126.3 220.1M1551.1 199.7L1604.5 192.3M172.3 172.5L157.3 217.4M221.2 172.1L217.1 217.1M245.6 170.3L247.1 214.4M270.3 171.8L276.5 211.8M294.4 169.9L306.7 214.1M318.2 168.1L335.7 211.5M343.4 169.6L364.1 208.9M366.8 167.8L395.2 211.2M392.5 169.2L423.1 208.6M415.7 167.4L450.6 206.1M464.7 167.0L509.4 205.7M487.2 165.3L541.9 207.9M509.4 163.5L568.5 205.4M536.1 164.9L594.6 202.9M557.9 163.1L627.8 205.1M585.1 164.5L653.5 202.6M606.7 162.8L687.5 204.7M627.9 161.1L712.6 202.2M655.6 162.4L737.4 199.8M704.7 162.1L796.3 199.4M725.3 160.3L831.7 201.5M754.0 161.7L855.5 199.1M774.3 160.0L891.6 201.2M794.3 158.2L915.0 198.7M823.4 159.6L951.8 200.8M843.1 157.9L974.7 198.4M872.7 159.2L1012.3 200.5M892.1 157.5L1034.7 198.0M941.3 157.1L1095.0 197.6M971.9 158.5L1134.1 199.7M990.7 156.8L1155.5 197.3M1021.8 158.1L1195.4 199.4M1040.2 156.4L1216.3 196.9M1071.9 157.7L1257.0 199.0M1089.9 156.0L1277.4 196.5M1122.1 157.3L1318.9 198.6M1139.9 155.6L1338.8 196.2M1190.0 155.2L1424.3 200.4M1223.2 156.6L1443.5 197.9M1240.2 154.9L1487.5 200.0M1274.0 156.2L1506.2 197.5M1290.7 154.5L1551.1 199.7M1325.0 155.8L1569.2 197.1M1341.4 154.1L1614.9 199.3M1376.2 155.4L1604.5 192.3M1411.7 156.8L1594.8 185.6M1463.6 156.4L1601.9 177.2M1479.2 154.7L1592.8 171.4M1515.8 156.0L1608.6 169.4M1531.0 154.3L1599.6 164.0M1568.1 155.6L1591.1 158.8"/><path stroke="#dcdcdc" stroke-opacity="0.233" d="M-31.7 228.8L66.2 220.4M-37.5 234.3L157.3 217.4M-8.8 237.0L247.1 214.4M-20.1 249.1L423.1 208.6M-26.2 255.6L509.4 205.7M5.1 258.8L568.5 205.4M110.4 255.0L653.5 202.6M214.0 251.3L712.6 202.2M316.1 247.7L772.0 201.9M416.6 244.1L855.5 199.1M484.6 243.8L915.0 198.7M583.4 240.2L974.7 198.4M748.5 236.4L1095.0 197.6M816.7 236.1L1155.5 197.3M885.3 235.8L1216.3 196.9M954.2 235.4L1257.0 199.0M6.4 220.7L-8.8 237.0M1023.5 235.1L1318.9 198.6M34.2 223.1L5.1 258.8M1093.1 234.8L1381.0 198.3M66.2 220.4L41.9 255.3M1163.1 234.5L1443.5 197.9M97.7 217.7L74.2 258.5M1233.5 234.1L1506.2 197.5M126.3 220.1L110.4 255.0M1304.2 233.8L1551.1 199.7M157.3 217.4L145.8 251.6M1424.8 236.4L1607.5 209.5M217.1 217.1L214.0 251.3M1497.3 236.1L1599.5 220.5M247.1 214.4L248.2 247.9M1570.2 235.7L1590.8 232.5M276.5 211.8L282.6 251.0M306.7 214.1L316.1 247.7M335.7 211.5L348.9 244.4M364.1 208.9L384.4 247.4M395.2 211.2L416.6 244.1M423.1 208.6L453.0 247.1M450.6 206.1L484.6 243.8M509.4 205.7L553.0 243.5M541.9 207.9L583.4 240.2M568.5 205.4L613.1 237.0M594.6 202.9L651.5 239.9M627.8 205.1L680.7 236.7M653.5 202.6L720.0 239.6M687.5 204.7L748.5 236.4M712.6 202.2L788.8 239.3M737.4 199.8L816.7 236.1M796.3 199.4L885.3 235.8M831.7 201.5L912.0 232.6M855.5 199.1L954.2 235.4M891.6 201.2L980.3 232.3M915.0 198.7L1023.5 235.1M951.8 200.8L1048.9 232.0M974.7 198.4L1093.1 234.8M1012.3 200.5L1117.9 231.6M1034.7 198.0L1163.1 234.5M1095.0 197.6L1233.5 234.1M1134.1 199.7L1280.8 237.1M1155.5 197.3L1304.2 233.8M1195.4 199.4L1352.6 236.7M1216.3 196.9L1375.3 233.5M1257.0 199.0L1424.8 236.4M1277.4 196.5L1446.7 233.2M1318.9 198.6L1497.3 236.1M1338.8 196.2L1518.6 232.8M1424.3 200.4L1590.8 232.5M1443.5 197.9L1611.0 229.3M1487.5 200.0L1599.5 220.5M1506.2 197.5L1618.8 217.6M1551.1 199.7L1607.5 209.5M1569.2 197.1L1597.0 201.8"/><path stroke="#dcdcdc" stroke-opacity="0.292" d="M-32.5 262.3L5.1 258.8M-39.2 269.4L110.4 255.0M-6.5 273.0L214.0 251.3M-12.8 280.7L316.1 247.7M-19.4 288.7L416.6 244.1M15.8 292.8L484.6 243.8M133.6 288.3L583.4 240.2M363.1 279.5L748.5 236.4M474.9 275.2L816.7 236.1M551.1 275.0L885.3 235.8M660.7 270.8L954.2 235.4M737.0 270.5L1023.5 235.1M5.1 258.8L-6.5 273.0M813.7 270.3L1093.1 234.8M41.9 255.3L15.8 292.8M920.9 266.1L1163.1 234.5M74.2 258.5L56.9 288.5M997.7 265.8L1233.5 234.1M110.4 255.0L93.2 292.6M1075.0 265.5L1304.2 233.8M145.8 251.6L133.6 288.3M1230.8 265.0L1424.8 236.4M214.0 251.3L210.7 288.1M1283.5 268.7L1497.3 236.1M248.2 247.9L249.3 283.9M1363.4 268.4L1570.2 235.7M282.6 251.0L287.0 279.7M1443.8 268.1L1602.5 242.1M316.1 247.7L326.1 283.7M1524.6 267.9L1593.2 256.2M348.9 244.4L363.1 279.5M1582.9 271.7L1606.0 267.6M384.4 247.4L399.2 275.5M416.6 244.1L439.6 279.3M453.0 247.1L474.9 275.2M484.6 243.8L509.5 271.3M553.0 243.5L584.9 271.0M583.4 240.2L627.7 274.7M613.1 237.0L660.7 270.8M651.5 239.9L704.8 274.5M680.7 236.7L737.0 270.5M720.0 239.6L768.6 266.6M748.5 236.4L813.7 270.3M788.8 239.3L844.5 266.3M816.7 236.1L890.9 270.0M885.3 235.8L968.5 269.7M912.0 232.6L997.7 265.8M954.2 235.4L1046.6 269.5M980.3 232.3L1075.0 265.5M1023.5 235.1L1125.1 269.2M1048.9 232.0L1152.7 265.3M1093.1 234.8L1204.1 268.9M1117.9 231.6L1230.8 265.0M1163.1 234.5L1283.5 268.7M1233.5 234.1L1363.4 268.4M1280.8 237.1L1388.5 264.4M1304.2 233.8L1443.8 268.1M1352.6 236.7L1500.7 271.9M1375.3 233.5L1524.6 267.9M1424.8 236.4L1582.9 271.7M1446.7 233.2L1606.0 267.6M1497.3 236.1L1593.2 256.2M1518.6 232.8L1615.0 252.5"/><path stroke="#dcdcdc" stroke-opacity="0.350" d="M-26.3 297.2L15.8 292.8M-33.6 306.2L133.6 288.3M-49.5 325.7L363.1 279.5M80.6 320.4L474.9 275.2M208.3 315.2L551.1 275.0M333.5 310.1L660.7 270.8M456.5 305.2L737.0 270.5M540.0 305.0L813.7 270.3M15.8 292.8L-3.5 320.5M660.2 300.1L920.9 266.1M56.9 288.5L35.5 325.6M743.9 299.9L997.7 265.8M93.2 292.6L80.6 320.4M828.0 299.7L1075.0 265.5M133.6 288.3L124.5 315.4M998.0 299.3L1230.8 265.0M210.7 288.1L208.3 315.2M1083.7 299.1L1283.5 268.7M249.3 283.9L250.2 310.3M1170.1 298.9L1363.4 268.4M287.0 279.7L292.5 315.1M1256.9 298.7L1443.8 268.1M326.1 283.7L333.5 310.1M1344.4 298.5L1524.6 267.9M363.1 279.5L373.5 305.3M1432.4 298.3L1582.9 271.7M399.2 275.5L417.4 310.0M1521.0 298.2L1596.0 284.3M439.6 279.3L456.5 305.2M1584.9 302.8L1610.1 297.9M474.9 275.2L501.8 309.8M509.5 271.3L540.0 305.0M584.9 271.0L624.0 304.8M627.7 274.7L660.2 300.1M660.7 270.8L708.5 304.6M704.8 274.5L743.9 299.9M737.0 270.5L778.3 295.3M768.6 266.6L828.0 299.7M813.7 270.3L861.6 295.1M844.5 266.3L912.7 299.5M890.9 270.0L945.3 294.9M968.5 269.7L1029.6 294.7M997.7 265.8L1083.7 299.1M1046.6 269.5L1114.4 294.5M1075.0 265.5L1170.1 298.9M1125.1 269.2L1199.7 294.3M1152.7 265.3L1256.9 298.7M1204.1 268.9L1285.6 294.0M1230.8 265.0L1344.4 298.5M1283.5 268.7L1372.1 293.8M1363.4 268.4L1494.7 303.0M1388.5 264.4L1521.0 298.2M1443.8 268.1L1584.9 302.8M1500.7 271.9L1610.1 297.9M1524.6 267.9L1596.0 284.3M1582.9 271.7L1619.8 279.9"/><path stroke="#dcdcdc" stroke-opacity="0.408" d="M-10.7 330.9L80.6 320.4M-18.4 341.8L208.3 315.2M-26.5 353.5L333.5 310.1M113.8 347.5L456.5 305.2M251.2 341.6L540.0 305.0M-3.5 320.5L-10.7 330.9M385.8 335.9L660.2 300.1M35.5 325.6L22.9 347.5M476.4 335.8L743.9 299.9M80.6 320.4L65.5 353.5M607.9 330.2L828.0 299.7M124.5 315.4L113.8 347.5M827.1 324.5L998.0 299.3M208.3 315.2L205.3 347.5M918.1 324.4L1083.7 299.1M250.2 310.3L251.2 341.6M1009.6 324.3L1170.1 298.9M292.5 315.1L295.8 336.0M1101.8 324.2L1256.9 298.7M333.5 310.1L342.3 341.6M1194.7 324.0L1344.4 298.5M373.5 305.3L385.8 335.9M1288.2 323.9L1432.4 298.3M417.4 310.0L428.2 330.4M1352.2 329.3L1521.0 298.2M456.5 305.2L476.4 335.8M1448.2 329.2L1584.9 302.8M501.8 309.8L517.7 330.3M1544.9 329.1L1599.4 318.1M540.0 305.0L567.7 335.7M624.0 304.8L647.0 324.8M660.2 300.1L698.7 330.1M708.5 304.6L736.8 324.6M743.9 299.9L790.1 330.0M778.3 295.3L827.1 324.5M828.0 299.7L882.2 329.9M861.6 295.1L918.1 324.4M912.7 299.5L974.9 329.8M945.3 294.9L1009.6 324.3M1029.6 294.7L1101.8 324.2M1083.7 299.1L1162.3 329.5M1114.4 294.5L1194.7 324.0M1170.1 298.9L1256.9 329.4M1199.7 294.3L1288.2 323.9M1256.9 298.7L1352.2 329.3M1285.6 294.0L1382.3 323.8M1344.4 298.5L1448.2 329.2M1372.1 293.8L1477.1 323.7M1494.7 303.0L1615.2 334.8M1521.0 298.2L1599.4 318.1M1584.9 302.8L1625.5 312.8"/><path stroke="#dcdcdc" stroke-opacity="0.467" d="M-35.1 365.9L113.8 347.5M-44.4 379.1L251.2 341.6M53.8 379.2L385.8 335.9M22.9 347.5L0.6 386.2M203.1 372.5L476.4 335.8M65.5 353.5L53.8 379.2M349.1 366.0L607.9 330.2M113.8 347.5L105.4 372.5M589.3 359.6L827.1 324.5M205.3 347.5L203.1 372.5M728.5 353.3L918.1 324.4M251.2 341.6L252.0 366.0M826.0 353.3L1009.6 324.3M295.8 336.0L301.5 372.6M924.2 353.2L1101.8 324.2M342.3 341.6L349.1 366.0M1023.2 353.2L1194.7 324.0M385.8 335.9L395.3 359.6M1122.8 353.2L1288.2 323.9M428.2 330.4L446.9 366.0M1223.3 353.2L1352.2 329.3M476.4 335.8L492.0 359.6M1324.4 353.2L1448.2 329.2M517.7 330.3L535.7 353.3M1426.4 353.1L1544.9 329.1M567.7 335.7L589.3 359.6M647.0 324.8L687.3 359.6M698.7 330.1L728.5 353.3M736.8 324.6L786.1 359.6M790.1 330.0L826.0 353.3M827.1 324.5L864.8 347.1M882.2 329.9L924.2 353.2M918.1 324.4L961.8 347.1M974.9 329.8L1023.2 353.2M1009.6 324.3L1059.4 347.1M1101.8 324.2L1157.8 347.0M1162.3 329.5L1223.3 353.2M1194.7 324.0L1256.9 347.0M1256.9 329.4L1324.4 353.2M1288.2 323.9L1394.5 359.6M1352.2 329.3L1426.4 353.1M1382.3 323.8L1498.6 359.6M1448.2 329.2L1529.0 353.1M1477.1 323.7L1603.5 359.6"/><path stroke="#dcdcdc" stroke-opacity="0.525" d="M-54.2 393.3L53.8 379.2M0.6 386.2L-7.9 400.9M-7.9 400.9L203.1 372.5M53.8 379.2L40.4 408.7M95.9 401.0L349.1 366.0M105.4 372.5L95.9 401.0M406.2 386.6L589.3 359.6M203.1 372.5L200.5 401.2M509.6 386.7L728.5 353.3M252.0 366.0L252.9 393.7M658.9 379.7L826.0 353.3M301.5 372.6L303.6 386.5M762.5 379.7L924.2 353.2M349.1 366.0L356.9 393.8M866.9 379.8L1023.2 353.2M395.3 359.6L406.2 386.6M972.1 379.9L1122.8 353.2M446.9 366.0L461.7 394.0M1078.2 380.0L1223.3 353.2M492.0 359.6L509.6 386.7M1185.1 380.1L1324.4 353.2M535.7 353.3L556.1 379.6M1292.9 380.1L1426.4 353.1M589.3 359.6L613.8 386.8M1511.0 380.3L1603.5 359.6M687.3 359.6L718.9 386.9M728.5 353.3L762.5 379.7M786.1 359.6L804.8 372.8M826.0 353.3L866.9 379.8M864.8 347.1L907.7 372.9M924.2 353.2L972.1 379.9M961.8 347.1L1011.5 372.9M1023.2 353.2L1078.2 380.0M1059.4 347.1L1116.1 373.0M1157.8 347.0L1221.6 373.0M1223.3 353.2L1292.9 380.1M1256.9 347.0L1327.8 373.1M1324.4 353.2L1401.5 380.2M1394.5 359.6L1478.2 387.7M1426.4 353.1L1511.0 380.3M1498.6 359.6L1590.3 387.8M1529.0 353.1L1621.4 380.4"/><path stroke="#dcdcdc" stroke-opacity="0.583" d="M40.4 408.7L6.7 482.7M-16.9 416.6L95.9 401.0M95.9 401.0L72.1 472.3M-37.3 452.0L406.2 386.6M200.5 401.2L195.8 452.8M-48.7 471.8L509.6 386.7M252.9 393.7L253.9 425.7M-61.2 493.4L6.7 482.7M469.9 409.5L658.9 379.7M303.6 386.5L308.4 417.4M579.5 409.7L762.5 379.7M356.9 393.8L361.2 409.3M736.4 402.0L866.9 379.8M406.2 386.6L418.7 417.6M846.2 402.2L972.1 379.9M461.7 394.0L469.9 409.5M957.0 402.4L1078.2 380.0M509.6 386.7L519.4 401.7M1068.7 402.6L1185.1 380.1M556.1 379.6L579.5 409.7M1181.3 402.7L1292.9 380.1M613.8 386.8L627.5 401.9M1335.7 419.6L1511.0 380.3M718.9 386.9L736.4 402.0M1418.0 428.6L1590.3 387.8M762.5 379.7L801.5 410.1M1466.6 447.4L1608.7 411.7M804.8 372.8L846.2 402.2M1557.4 457.7L1594.0 447.8M866.9 379.8L913.9 410.4M907.7 372.9L957.0 402.4M972.1 379.9L998.7 394.7M1011.5 372.9L1068.7 402.6M1078.2 380.0L1108.7 394.8M1116.1 373.0L1181.3 402.7M1221.6 373.0L1335.7 419.6M1292.9 380.1L1418.0 428.6M1327.8 373.1L1557.4 457.7M1401.5 380.2L1594.0 447.8M1478.2 387.7L1629.4 438.4M1511.0 380.3L1608.7 411.7"/><path stroke="#dcdcdc" stroke-opacity="0.642" d="M6.7 482.7L-14.8 529.9M72.1 472.3L-11.2 721.6M195.8 452.8L175.4 679.7M253.9 425.7L261.5 660.4M6.7 482.7L469.9 409.5M308.4 417.4L343.4 642.1M-74.7 516.9L579.5 409.7M361.2 409.3L421.2 624.6M-14.8 529.9L736.4 402.0M418.7 417.6L495.4 608.0M-27.1 557.0L846.2 402.2M469.9 409.5L566.2 592.1M-40.7 586.8L957.0 402.4M519.4 401.7L633.7 577.0M-55.7 619.8L1068.7 402.6M579.5 409.7L698.3 562.5M-72.5 656.6L1181.3 402.7M627.5 401.9L786.8 578.2M-11.2 721.6L175.4 679.7M566.2 592.1L1335.7 419.6M736.4 402.0L941.6 579.5M786.8 578.2L1418.0 428.6M801.5 410.1L1040.4 596.3M941.6 579.5L1466.6 447.4M846.2 402.2L1145.3 614.1M1040.4 596.3L1557.4 457.7M913.9 410.4L1256.7 633.1M1202.3 597.7L1615.5 479.0M957.0 402.4L1375.3 653.2M1256.7 633.1L1599.0 527.1M998.7 394.7L1582.9 719.8M1375.3 653.2L1624.5 569.6M1068.7 402.6L1637.3 697.7M1501.9 674.7L1605.9 636.6M1108.7 394.8L1605.9 636.6M1582.9 719.8L1637.3 697.7M1181.3 402.7L1654.1 618.9M1335.7 419.6L1599.0 527.1M1418.0 428.6L1639.8 514.5M1557.4 457.7L1615.5 479.0"/><path stroke="#dcdcdc" stroke-opacity="0.700" d="M175.4 679.7L148.7 975.9M261.5 660.4L273.3 1023.1M343.4 642.1L396.2 981.8M421.2 624.6L534.2 1029.7M495.4 608.0L648.5 987.8M566.2 592.1L800.5 1036.5M633.7 577.0L905.6 993.9M698.3 562.5L1003.0 954.5M786.8 578.2L1167.9 1000.1M175.4 679.7L566.2 592.1M941.6 579.5L1435.3 1006.5M-27.8 771.3L786.8 578.2M1040.4 596.3L1514.7 965.8M-46.8 828.2L941.6 579.5M1145.3 614.1L1708.0 1012.9M-68.7 893.8L1040.4 596.3M1256.7 633.1L1656.8 893.0M-94.2 970.2L1202.3 597.7M1375.3 653.2L1616.1 797.6M148.7 975.9L1256.7 633.1M1582.9 719.8L1674.9 771.0M396.2 981.8L1375.3 653.2M648.5 987.8L1501.9 674.7M1003.0 954.5L1582.9 719.8M1514.7 965.8L1656.8 893.0"/><path stroke="#d4d4d4" stroke-opacity="0.062" d="M-14.1 107.0L516.8 79.6M612.4 86.9L885.9 71.6M950.7 81.6L1113.5 71.7M1182.4 83.5L1307.6 75.0M1393.7 88.8L1505.3 80.2M55.9 102.1L36.5 115.9M213.6 92.8L211.0 104.8M356.1 85.5L367.1 96.3M491.5 80.9L512.1 89.7M620.9 76.4L655.4 85.9M749.3 73.1L800.1 83.2M885.9 71.6L950.7 81.6M1031.1 71.0L1120.8 82.3M1208.0 73.3L1334.9 86.6M1425.0 77.9L1592.5 92.8"/><path stroke="#d4d4d4" stroke-opacity="0.125" d="M-6.4 121.4L612.4 86.9M751.3 93.8L950.7 81.6M1054.8 92.2L1182.4 83.5M1292.8 96.5L1393.7 88.8M1527.7 104.5L1593.7 98.6M36.5 115.9L18.3 128.8M211.0 104.8L208.7 115.9M367.1 96.3L377.3 106.2M512.1 89.7L536.2 100.2M655.4 85.9L686.7 94.4M800.1 83.2L848.8 92.8M950.7 81.6L1021.4 92.5M1120.8 82.3L1222.0 94.9M1334.9 86.6L1500.2 103.8"/><path stroke="#d4d4d4" stroke-opacity="0.188" d="M-18.5 140.8L751.3 93.8M870.9 104.6L1054.8 92.2M1169.1 106.1L1292.8 96.5M1419.9 114.2L1527.7 104.5M18.3 128.8L-3.5 144.2M208.7 115.9L205.9 129.1M377.3 106.2L389.3 117.8M536.2 100.2L561.1 110.9M686.7 94.4L729.0 106.0M848.8 92.8L906.7 104.3M1021.4 92.5L1107.5 105.8M1222.0 94.9L1364.1 112.7M1500.2 103.8L1603.1 114.6"/><path stroke="#d4d4d4" stroke-opacity="0.250" d="M-9.2 164.3L870.9 104.6M859.5 129.9L1169.1 106.1M1197.1 134.2L1419.9 114.2M1488.9 148.3L1601.6 136.0M-3.5 144.2L-6.9 146.6M205.9 129.1L199.7 158.3M389.3 117.8L415.4 143.2M561.1 110.9L615.3 134.3M729.0 106.0L817.6 130.2M906.7 104.3L1039.7 130.6M1107.5 105.8L1319.1 138.3M1364.1 112.7L1595.7 141.6"/><path stroke="#d4d4d4" stroke-opacity="0.312" d="M-26.0 198.0L859.5 129.9M-14.3 242.9L1197.1 134.2M395.2 267.9L1488.9 148.3M1206.0 257.7L1597.0 201.8M199.7 158.3L172.9 284.1M415.4 143.2L528.8 253.3M615.3 134.3L872.6 245.3M817.6 130.2L1309.4 264.7M1039.7 130.6L1602.5 242.1M1319.1 138.3L1611.6 183.4"/><path stroke="#d4d4d4" stroke-opacity="0.375" d="M-41.3 315.7L395.2 267.9M912.7 299.5L1206.0 257.7M172.9 284.1L165.3 320.3M528.8 253.3L577.1 300.3M872.6 245.3L998.0 299.3M1309.4 264.7L1432.4 298.3"/><path stroke="#d4d4d4" stroke-opacity="0.438" d="M698.7 330.1L912.7 299.5M165.3 320.3L160.7 341.7M577.1 300.3L607.9 330.2M998.0 299.3L1068.3 329.7M1432.4 298.3L1544.9 329.1"/><path stroke="#d4d4d4" stroke-opacity="0.500" d="M492.0 359.6L698.7 330.1M160.7 341.7L152.7 379.3M1529.0 353.1L1615.2 334.8M607.9 330.2L631.7 353.3M1068.3 329.7L1122.8 353.2M1544.9 329.1L1632.5 353.1"/><path stroke="#d4d4d4" stroke-opacity="0.562" d="M252.9 393.7L492.0 359.6M152.7 379.3L149.7 393.6M1401.5 380.2L1529.0 353.1M631.7 353.3L658.9 379.7M1122.8 353.2L1185.1 380.1"/><path stroke="#d4d4d4" stroke-opacity="0.625" d="M-26.7 433.6L252.9 393.7M149.7 393.6L135.1 462.4M1256.9 411.0L1401.5 380.2M658.9 379.7L690.0 409.9M1185.1 380.1L1256.9 411.0"/><path stroke="#d4d4d4" stroke-opacity="0.688" d="M135.1 462.4L84.6 700.1M-91.2 697.8L1256.9 411.0M690.0 409.9L848.3 563.7M1256.9 411.0L1624.5 569.6"/><path stroke="#d4d4d4" stroke-opacity="0.750" d="M84.6 700.1L17.4 1016.6M848.3 563.7L1256.4 960.1M1256.4 960.1L1616.1 797.6"/></g><g fill="none" stroke-width="1.3"><path stroke="#c45e60" stroke-opacity="0.083" d="M359.5 88.9L371.3 100.4"/><path stroke="#c45e60" stroke-opacity="0.167" d="M371.3 100.4L382.2 110.9"/><path stroke="#c45e60" stroke-opacity="0.250" d="M382.2 110.9L405.7 133.8"/><path stroke="#c45e60" stroke-opacity="0.333" d="M405.7 133.8L429.2 156.5"/><path stroke="#c45e60" stroke-opacity="0.417" d="M429.2 156.5L456.3 182.9"/><path stroke="#c45e60" stroke-opacity="0.500" d="M456.3 182.9L487.4 213.1"/><path stroke="#c45e60" stroke-opacity="0.583" d="M487.4 213.1L515.6 240.5"/><path stroke="#c45e60" stroke-opacity="0.667" d="M515.6 240.5L551.1 275.0"/><path stroke="#c45e60" stroke-opacity="0.750" d="M551.1 275.0L597.0 319.6"/><path stroke="#c45e60" stroke-opacity="0.833" d="M597.0 319.6L644.9 366.1"/><path stroke="#c45e60" stroke-opacity="0.917" d="M644.9 366.1L707.4 426.8"/><path stroke="#c45e60" stroke-opacity="1.000" d="M707.4 426.8L1256.4 960.1"/><path stroke="#8cc06a" stroke-opacity="0.750" d="M1498.6 359.6L1615.2 334.8"/><path stroke="#8cc06a" stroke-opacity="0.833" d="M1331.5 395.1L1498.6 359.6"/><path stroke="#8cc06a" stroke-opacity="0.917" d="M1134.9 436.9L1331.5 395.1"/><path stroke="#8cc06a" stroke-opacity="1.000" d="M-91.2 697.8L1134.9 436.9"/></g></g><g fill="none" stroke="#000" stroke-width="1" stroke-linejoin="round">
<path d="M282.7 488.3L365.2 451.2M282.7 488.3L473.5 466.7M282.7 488.3L464.1 539.7M282.7 488.3L356.3 521.9M365.2 451.2L473.5 466.7L464.1 539.7L356.3 521.9Z" stroke="#1a1a1a" stroke-width="0.85"/>
</g>
<path d="M382.3 447.3L425.1 409.4L456.9 457.4Z" fill="#4a4a4a"/>
<g>
<circle cx="1016" cy="168.2" r="12.3" fill="none" stroke="#333" stroke-width="1.1" stroke-dasharray="2.4 5.3"/>
<circle cx="1016" cy="168.2" r="9.2" fill="none" stroke="#4a3a3a" stroke-width="1"/>
<path d="M1016.2 165.2l3 3l-3 3l-3-3z" fill="none" stroke="#4a3a3a" stroke-width="0.9"/>
<path d="M1015.3 177.4L982.3 616" stroke="#dadada" stroke-width="1"/>
</g>
<g>
<path d="M793 491v9M793 520v8M774.5 512.5l9-2M802.5 508l9-2" stroke="#111" stroke-width="1.4"/>
<path d="M787 503l12 14" stroke="#111" stroke-width="1.1"/>
<circle cx="793" cy="510" r="10" fill="none" stroke="#fff" stroke-width="1.8"/>
<circle cx="793" cy="510" r="10" fill="none" stroke="#c43030" stroke-width="1.8" stroke-dasharray="4 4"/>
<circle cx="793" cy="510" r="2.8" fill="#f2a020" stroke="#333" stroke-width="0.6"/>
</g>
</svg>
</div>
<div id="outl" class="a">
<div class="a" style="left:0;top:0;width:331px;height:25px;background:#f4f4f4"></div>
<div class="a" style="left:0;top:25px;width:331px;height:21px;background:#ffffff"></div><div class="a" style="left:0;top:46px;width:331px;height:20px;background:#f4f4f4"></div><div class="a" style="left:0;top:66px;width:331px;height:20px;background:#ffffff"></div><div class="a" style="left:0;top:86px;width:331px;height:20px;background:#58b0f8"></div><div class="a" style="left:0;top:106px;width:331px;height:20px;background:#ffffff"></div><div class="a" style="left:0;top:126px;width:331px;height:20px;background:#f4f4f4"></div><div class="a" style="left:0;top:146px;width:331px;height:20px;background:#ffffff"></div><div class="a" style="left:0;top:166px;width:331px;height:20px;background:#f4f4f4"></div><div class="a" style="left:0;top:186px;width:331px;height:20px;background:#ffffff"></div><div class="a" style="left:0;top:206px;width:331px;height:20px;background:#f4f4f4"></div><div class="a" style="left:0;top:226px;width:331px;height:20px;background:#ffffff"></div><div class="a" style="left:0;top:246px;width:331px;height:20px;background:#f4f4f4"></div><div class="a" style="left:0;top:266px;width:331px;height:20px;background:#ffffff"></div><div class="a" style="left:0;top:286px;width:331px;height:20px;background:#f4f4f4"></div>
</div>
<div id="outlc">
<div class="btn" style="left:1597px;top:53px;width:31px;height:19px"></div>
<svg class="a" style="left:1600px;top:55px" width="26" height="15" viewBox="0 0 26 15"><rect x="1.5" y="1" width="4.5" height="2.5" fill="#333"/><path d="M3.5 3.5v9h3M3.5 8h3" fill="none" stroke="#555" stroke-width="1"/><rect x="6.5" y="6.5" width="6" height="3" fill="#333"/><rect x="6.5" y="11" width="6" height="3" fill="#333"/><path d="M16 6l3 3l3-3" fill="none" stroke="#111" stroke-width="1.3"/></svg>
<div class="btn" style="left:1634px;top:53px;width:31px;height:19px"></div>
<svg class="a" style="left:1637px;top:55px" width="26" height="15" viewBox="0 0 26 15"><path d="M5.5 1.5h8v8h-8z" fill="none" stroke="#333" stroke-width="1.1"/><path d="M3.5 3.5v8h8M1.5 5.5v8h8" fill="none" stroke="#333" stroke-width="1"/><path d="M6.5 8.5l2.5-4l2 2.5l1.5-1l1 2.5z" fill="#333"/><path d="M16 6l3 3l3-3" fill="none" stroke="#111" stroke-width="1.3"/></svg>
<div class="btn" style="left:1687px;top:53px;width:111px;height:19px;border-color:#c8c8c8"></div>
<svg class="a" style="left:1691px;top:55px" width="15" height="15" viewBox="0 0 15 15"><circle cx="9" cy="5.8" r="4" fill="none" stroke="#222" stroke-width="1.2"/><path d="M6 8.8L1.5 13.3" stroke="#222" stroke-width="1.2"/></svg>
<div class="btn" style="left:1855px;top:53px;width:31px;height:19px"></div>
<svg class="a" style="left:1858px;top:55px" width="26" height="15" viewBox="0 0 26 15"><path d="M1.5 2h11l-4.3 5.5l-2 6.5v-6.5z" fill="none" stroke="#222" stroke-width="1.2" stroke-linejoin="round"/><path d="M16 6l3 3l3-3" fill="none" stroke="#111" stroke-width="1.3"/></svg>
<div class="a" style="left:1893px;top:53px;width:19px;height:19px;background:#e4e4e4;border-radius:5px"></div>
<svg class="a" style="left:1895px;top:54px" width="16" height="16" viewBox="0 0 16 16"><path d="M2 6h5M2.8 6v8h8.2V9" fill="none" stroke="#333" stroke-width="1.1"/><path d="M5 11h3" stroke="#888" stroke-width="1.2"/><circle cx="11.5" cy="4.5" r="3.6" fill="#222"/><path d="M11.5 2.5v4M9.5 4.5h4" stroke="#fff" stroke-width="1.1"/></svg>

<svg class="a" style="left:1611px;top:80px" width="14" height="13" viewBox="0 0 14 13"><rect x="0" y="0" width="14" height="3" fill="#777"/><rect x="1" y="4" width="12" height="9" fill="#777"/><rect x="5" y="6" width="4" height="1.6" fill="#fff"/></svg>
<span class="t" style="left:1632px;top:82px;color:#111">Коллекция сцены</span>
<svg class="a" style="left:1614px;top:103px" width="7" height="7" viewBox="0 0 7 7"><path d="M0.3 0.5h6.4L3.5 6.5z" fill="#111"/></svg>
<div class="a" style="left:1628px;top:97px;width:20px;height:18px;background:#c4c4c4;border:1px solid #adadad;border-radius:4px"></div>
<svg class="a" style="left:1631px;top:99px" width="14" height="13" viewBox="0 0 14 13"><rect x="0.5" y="0.5" width="13" height="3" fill="#707070"/><rect x="1.5" y="4.5" width="11" height="8" fill="#707070"/><rect x="5" y="6.5" width="4" height="1.5" fill="#ddd"/></svg>
<span class="t" style="left:1652px;top:102px;color:#111">Collection</span>
<div class="a" style="left:1877px;top:101px;width:10px;height:10px;background:#333;border-radius:2px"></div>
<svg class="a" style="left:1877px;top:101px" width="10" height="10" viewBox="0 0 10 10"><path d="M2 5l2.2 2.2L8.2 2.8" fill="none" stroke="#fff" stroke-width="1.6"/></svg>
<svg class="a" style="left:1896px;top:99.5px" width="14" height="11" viewBox="0 0 14 11"><path d="M0.6 5.5C2.5 -0.3 11.5 -0.3 13.4 5.5C11.5 11.3 2.5 11.3 0.6 5.5z" fill="#333"/><circle cx="7" cy="5.5" r="3" fill="#f4f4f4"/><circle cx="7" cy="5.5" r="1.6" fill="#333"/></svg>
<div class="a" style="left:1617px;top:121px;width:1px;height:50px;background:#888"></div>
<svg class="a" style="left:1635px;top:124px" width="6" height="6" viewBox="0 0 6 6"><path d="M0.3 0.2v5.6L5.8 3z" fill="#111"/></svg>
<svg class="a" style="left:1650px;top:118px" width="16" height="15" viewBox="0 0 16 15"><circle cx="4" cy="4" r="3.6" fill="#e3872f"/><circle cx="10" cy="3.8" r="3.5" fill="#e3872f"/><circle cx="4" cy="4" r="1.1" fill="#fff"/><circle cx="10" cy="3.8" r="1.1" fill="#fff"/><rect x="2.5" y="8" width="9" height="5.5" fill="#e3872f"/><path d="M12 10.5l3.5-2.5v6z" fill="#e3872f"/><path d="M0.5 9.5h2v2.5h-2z" fill="#e3872f"/></svg>
<span class="t" style="left:1672px;top:122px;color:#111">Camera</span>
<div class="a" style="left:1731px;top:117px;width:20px;height:18px;background:#c4c4c4;border:1px solid #adadad;border-radius:4px"></div>
<svg class="a" style="left:1733px;top:118.5px" width="16" height="15" viewBox="0 0 16 15"><path d="M3.2 7.2A3 3 0 0 1 3.5 1.3H11A3 3 0 0 1 12.5 7.2z" fill="none" stroke="#2e7d3a" stroke-width="1.1"/><circle cx="11" cy="4.2" r="1.1" fill="none" stroke="#2e7d3a" stroke-width="0.9"/><rect x="4.5" y="9" width="6.5" height="4.2" fill="none" stroke="#2e7d3a" stroke-width="1.1"/><path d="M11 11.1l3.8-2.2v4.4z" fill="none" stroke="#2e7d3a" stroke-width="1"/><path d="M1.2 9.6v3M1.2 11.1h3.3" stroke="#2e7d3a" stroke-width="1"/></svg>
<svg class="a" style="left:1896px;top:119.5px" width="14" height="11" viewBox="0 0 14 11"><path d="M0.6 5.5C2.5 -0.3 11.5 -0.3 13.4 5.5C11.5 11.3 2.5 11.3 0.6 5.5z" fill="#333"/><circle cx="7" cy="5.5" r="3" fill="#fff"/><circle cx="7" cy="5.5" r="1.6" fill="#333"/></svg>
<svg class="a" style="left:1635px;top:144px" width="6" height="6" viewBox="0 0 6 6"><path d="M0.3 0.2v5.6L5.8 3z" fill="#111"/></svg>
<div class="a" style="left:1648px;top:137px;width:20px;height:18px;background:#3c7fc0;border-radius:4px"></div>
<svg class="a" style="left:1651px;top:139px" width="14" height="14" viewBox="0 0 14 14"><path d="M1 1h12L7 13.5z" fill="#e3872f"/><circle cx="7" cy="5" r="1.6" fill="#3c7fc0"/></svg>
<span class="t" style="left:1672px;top:142px;color:#fff">Cube</span>
<svg class="a" style="left:1719px;top:138px" width="16" height="16" viewBox="0 0 16 16"><path d="M2.5 2.5h11L8 13z" fill="none" stroke="#16787a" stroke-width="1.1"/><rect x="1" y="1" width="3" height="3" fill="#58b0f8" stroke="#16787a" stroke-width="1.1"/><rect x="12" y="1" width="3" height="3" fill="#58b0f8" stroke="#16787a" stroke-width="1.1"/><rect x="6.5" y="12" width="3" height="3" fill="#58b0f8" stroke="#16787a" stroke-width="1.1"/></svg>
<svg class="a" style="left:1896px;top:139.5px" width="14" height="11" viewBox="0 0 14 11"><path d="M0.6 5.5C2.5 -0.3 11.5 -0.3 13.4 5.5C11.5 11.3 2.5 11.3 0.6 5.5z" fill="#1d3b5a"/><circle cx="7" cy="5.5" r="3" fill="#58b0f8"/><circle cx="7" cy="5.5" r="1.6" fill="#1d3b5a"/></svg>
<svg class="a" style="left:1635px;top:164px" width="6" height="6" viewBox="0 0 6 6"><path d="M0.3 0.2v5.6L5.8 3z" fill="#111"/></svg>
<svg class="a" style="left:1651px;top:158px" width="14" height="17" viewBox="0 0 14 17"><circle cx="6.5" cy="6" r="5.8" fill="#e3872f"/><rect x="3.5" y="9" width="6" height="3" fill="#e3872f"/><path d="M4 5.5h5M5 5.5v3.5M8 5.5v3.5" stroke="#fff" stroke-width="1"/><path d="M3.5 13h6M4.5 15h4" stroke="#e3872f" stroke-width="1.2"/></svg>
<span class="t" style="left:1672px;top:162px;color:#111">Light</span>
<svg class="a" style="left:1720px;top:158px" width="14" height="16" viewBox="0 0 14 16"><path d="M4 13.5A6 6 0 1 1 10 13.5" fill="none" stroke="#2e7d3a" stroke-width="1.1"/><circle cx="7" cy="7" r="1.5" fill="none" stroke="#2e7d3a" stroke-width="1.1"/><path d="M7 8.5v2M7 12v1.5M7 14.5v1" stroke="#2e7d3a" stroke-width="1.1"/></svg>
<svg class="a" style="left:1896px;top:159.5px" width="14" height="11" viewBox="0 0 14 11"><path d="M0.6 5.5C2.5 -0.3 11.5 -0.3 13.4 5.5C11.5 11.3 2.5 11.3 0.6 5.5z" fill="#333"/><circle cx="7" cy="5.5" r="3" fill="#fff"/><circle cx="7" cy="5.5" r="1.6" fill="#333"/></svg>
</div>
<div id="props" class="a">
<div class="a" style="left:0;top:0;width:331px;height:26px;background:#f4f4f4"></div>
<div class="a" style="left:0;top:26px;width:28px;height:631px;background:#d8d8d8"></div>
<div class="a" style="left:1px;top:34px;width:27px;height:27px;background:#f0f0f0;border-radius:4px 0 0 4px"></div><div class="a" style="left:1px;top:70px;width:27px;height:27px;background:#f0f0f0;border-radius:4px 0 0 4px"></div><div class="a" style="left:1px;top:98px;width:27px;height:27px;background:#f0f0f0;border-radius:4px 0 0 4px"></div><div class="a" style="left:1px;top:126px;width:27px;height:27px;background:#f0f0f0;border-radius:4px 0 0 4px"></div><div class="a" style="left:1px;top:154px;width:27px;height:27px;background:#f0f0f0;border-radius:4px 0 0 4px"></div><div class="a" style="left:1px;top:182px;width:27px;height:27px;background:#f0f0f0;border-radius:4px 0 0 4px"></div><div class="a" style="left:1px;top:218px;width:27px;height:27px;background:#58b0f8;border-radius:4px 0 0 4px"></div><div class="a" style="left:1px;top:246px;width:27px;height:27px;background:#f0f0f0;border-radius:4px 0 0 4px"></div><div class="a" style="left:1px;top:274px;width:27px;height:27px;background:#f0f0f0;border-radius:4px 0 0 4px"></div><div class="a" style="left:1px;top:302px;width:27px;height:27px;background:#f0f0f0;border-radius:4px 0 0 4px"></div><div class="a" style="left:1px;top:330px;width:27px;height:27px;background:#f0f0f0;border-radius:4px 0 0 4px"></div><div class="a" style="left:1px;top:358px;width:27px;height:27px;background:#f0f0f0;border-radius:4px 0 0 4px"></div><div class="a" style="left:1px;top:386px;width:27px;height:27px;background:#f0f0f0;border-radius:4px 0 0 4px"></div><div class="a" style="left:1px;top:422px;width:27px;height:27px;background:#f0f0f0;border-radius:4px 0 0 4px"></div>
<div class="a" style="left:28px;top:122px;width:303px;height:255px;background:#f5f5f5"></div>
</div>
<div id="propc">
<div class="btn" style="left:1597px;top:365px;width:31px;height:20px"></div>
<svg class="a" style="left:1600px;top:367px" width="26" height="16" viewBox="0 0 26 16"><rect x="1" y="1.5" width="12" height="5.5" rx="2.75" fill="none" stroke="#333" stroke-width="1.2"/><path d="M3.75 1.5h3.5v5.5h-3.5a2.75 2.75 0 0 1 0-5.5z" fill="#333"/><rect x="1" y="8.5" width="12" height="5.5" rx="2.75" fill="none" stroke="#333" stroke-width="1.2"/><path d="M3.75 8.5h3.5v5.5h-3.5a2.75 2.75 0 0 1 0-5.5z" fill="#333"/><path d="M16 6l3 3l3-3" fill="none" stroke="#111" stroke-width="1.3"/></svg>
<div class="btn" style="left:1699px;top:365px;width:111px;height:20px;border-color:#c8c8c8"></div>
<svg class="a" style="left:1703px;top:367px" width="15" height="15" viewBox="0 0 15 15"><circle cx="9" cy="5.8" r="4" fill="none" stroke="#222" stroke-width="1.2"/><path d="M6 8.8L1.5 13.3" stroke="#222" stroke-width="1.2"/></svg>
<svg class="a" style="left:1588px;top:388px" width="28" height="430" viewBox="0 0 28 430">
<g fill="#666" stroke="#666">
<g transform="translate(0 5.5)"><path d="M9.5 10v6" stroke-width="1.2" fill="none"/><circle cx="9.5" cy="19.5" r="2.8" stroke="none"/><path d="M17.5 13v9" stroke-width="2.2" fill="none"/><path d="M14.5 9.5a3.2 3.2 0 0 0 6 0v-1.5h-1.5v2.5h-3v-2.5h-1.5z" stroke="none"/></g>
<rect x="8" y="54" width="13" height="8.5" fill="none" stroke-width="1.2"/><path d="M11 54v-2.5h5v2.5" fill="none" stroke-width="1.2"/><path d="M10 57h6M10 59.5h6" stroke-width="0.8"/><rect x="18.2" y="55.5" width="1.6" height="1.6" stroke="none"/><rect x="18.2" y="59" width="1.6" height="1.6" stroke="none"/>
<rect x="7.5" y="80" width="14" height="4" stroke="none"/><rect x="10" y="84" width="9" height="9" fill="none" stroke-width="1.1"/><path d="M11.5 92l3-4l3 4z" stroke="none" fill="#888"/>
<g transform="translate(0 2)"><path d="M11 104.5h10v10h-10z" fill="none" stroke-width="1.1"/><path d="M9 106.5v10h10M7 108.5v10h10" fill="none" stroke-width="0.9"/><path d="M12.5 112.5l3-4.5l2.5 3l1-1l1.5 2.5z" stroke="none"/></g>
<path d="M8 146l4-10l3 7" stroke="none"/><path d="M7.5 146.5l4.5-11l3.5 8z" stroke="none"/><circle cx="18" cy="136" r="1.8" stroke="none"/><circle cx="16" cy="144" r="3.7" fill="#f0f0f0" stroke-width="1.2"/>
</g>
<circle cx="15.1" cy="169.8" r="6.3" fill="none" stroke="#d83a3a" stroke-width="1.2"/><path d="M10.5 165.5c1-1.2 2.5-1.5 3.5-1c0.3 0.8 1.3 1 1.6 1.9c-0.6 1-1.6 0.9-2.1 1.8c-0.6 0.6-0.3 1.5 0.4 2.1c-1 0.1-1.6-0.6-2.3-1.2c-0.3-1.3-1.5-2.2-1.1-3.6z M14.5 170.5c1.2-0.8 2.6-0.4 3.4 0.4c0.5 1.2-0.4 2.4-1.5 3.1c-0.9 0.3-1.3-0.8-1.4-1.5c-0.6-0.5-0.8-1.3-0.5-2z" fill="#ee2a2a"/><path d="M20.2 164.7l2.2-2.2M9.9 175l-2.2 2.2" stroke="#d83a3a" stroke-width="1"/>
<path d="M8 201.5v-3.5h3.5M18.5 198h3.5v3.5M22 209.5v3.5h-3.5M11.5 213h-3.5v-3.5" fill="none" stroke="#5f7f98" stroke-width="1.1"/><rect x="11.5" y="201.5" width="7" height="7.5" fill="#d8700a"/>
<path d="M9 240.5L16.5 233" stroke="#3b5ccc" stroke-width="3" stroke-linecap="round"/><circle cx="18.3" cy="230.6" r="4.3" fill="#3b5ccc"/><path d="M18.8 230.2L22.5 226.3L24.5 228.4L20.8 232.2z" fill="#f0f0f0"/>
<g stroke="#3b5ccc" stroke-width="1" fill="#3b5ccc"><path d="M10 257h10M10 257v9.5M10 257l9 9.5"/><circle cx="10" cy="257" r="2.4" stroke="none"/><circle cx="20.5" cy="257.5" r="1.4" stroke="none"/><circle cx="10" cy="266.5" r="1.4" stroke="none"/><circle cx="19.2" cy="266.8" r="2" stroke="none"/></g>
<path d="M19.5 286.5A5.8 5.8 0 1 1 15.5 284.2" fill="none" stroke="#3b5ccc" stroke-width="1.2"/><circle cx="14.5" cy="290" r="2.4" fill="#3b5ccc"/><circle cx="20.5" cy="284.5" r="1.5" fill="#3b5ccc"/>
<path d="M10 322.5a4.5 4.5 0 0 1-1-6.5l8.5-5.5a3 3 0 0 1 4 4l-5.5 8.5a4.5 4.5 0 0 1-6 -0.5z" fill="none" stroke="#3b5ccc" stroke-width="1.2"/><circle cx="12.8" cy="319" r="2.6" fill="none" stroke="#3b5ccc" stroke-width="1.2"/><circle cx="12.8" cy="319" r="1" fill="#3b5ccc"/>
<path d="M8.5 340.5h12l-6 10z" fill="none" stroke="#2e7d3a" stroke-width="1.1"/><rect x="7" y="339" width="3" height="3" fill="#f0f0f0" stroke="#2e7d3a" stroke-width="1"/><rect x="19" y="339" width="3" height="3" fill="#f0f0f0" stroke="#2e7d3a" stroke-width="1"/><rect x="13" y="349" width="3" height="3" fill="#f0f0f0" stroke="#2e7d3a" stroke-width="1"/>
<circle cx="14.5" cy="373.8" r="6.8" fill="#e02a2a"/><path d="M14.5 373.8h-6.8a6.8 6.8 0 0 0 6.8 6.8z" fill="#fff"/><path d="M14.5 373.8v-4.5a4.5 4.5 0 0 1 4.5 4.5z" fill="#f5b0b0" opacity="0.5"/>
<g fill="#e03030"><rect x="8" y="403" width="13.5" height="13.5" fill="#fff"/><rect x="8.000" y="403.000" width="3.375" height="3.375"/><rect x="14.750" y="403.000" width="3.375" height="3.375"/><rect x="11.375" y="406.375" width="3.375" height="3.375"/><rect x="18.125" y="406.375" width="3.375" height="3.375"/><rect x="8.000" y="409.750" width="3.375" height="3.375"/><rect x="14.750" y="409.750" width="3.375" height="3.375"/><rect x="11.375" y="413.125" width="3.375" height="3.375"/><rect x="18.125" y="413.125" width="3.375" height="3.375"/></g>
</svg>
<svg class="a" style="left:1627px;top:399px" width="14" height="14" viewBox="0 0 14 14"><path d="M0.5 3.5v-3h3M10.5 0.5h3v3M13.5 10.5v3h-3M3.5 13.5h-3v-3" fill="none" stroke="#444" stroke-width="1"/><rect x="3" y="3" width="8" height="8" fill="#000"/></svg>
<span class="t" style="left:1650px;top:400.5px;color:#111">Cube</span>
<svg class="a" style="left:1894px;top:398px" width="16" height="16" viewBox="0 0 16 16"><path d="M9 1.5l5.5 5.5l-1.5 0.5l-3 3l0.5 2.5l-1 1l-6-6l1-1l2.5 0.5l3-3z" fill="none" stroke="#777" stroke-width="1"/><path d="M5.5 10.5L1.5 14.5" stroke="#777" stroke-width="1"/></svg>
<div class="a" style="left:1624px;top:432px;width:288px;height:20px;background:#fff;border:1px solid #c4c4c4;border-radius:5px"></div>
<div class="a" style="left:1625px;top:433px;width:30px;height:18px;background:#f6f6f6;border-radius:5px 0 0 5px;border-right:1px solid #c4c4c4"></div>
<svg class="a" style="left:1629px;top:435px" width="26" height="14" viewBox="0 0 26 14"><path d="M0.5 3.5v-3h3M10.5 0.5h3v3M13.5 10.5v3h-3M3.5 13.5h-3v-3" fill="none" stroke="#444" stroke-width="1"/><rect x="3" y="3" width="8" height="8" fill="#333"/><path d="M17 5l3 3l3-3" fill="none" stroke="#111" stroke-width="1.3"/></svg>
<span class="t" style="left:1663px;top:436.5px;color:#222">Cube</span>
<svg class="a" style="left:1625px;top:469px" width="7" height="7" viewBox="0 0 7 7"><path d="M0.3 0.5h6.4L3.5 6.5z" fill="#555"/></svg>
<span class="t" style="left:1638px;top:467px;font-size:12.4px;color:#111">Трансформация</span>
<svg class="a" style="left:1902px;top:470px" width="10" height="5" viewBox="0 0 10 5"><g fill="#b0b0b0"><rect x="0" y="0" width="1" height="1"/><rect x="3" y="0" width="1" height="1"/><rect x="6" y="0" width="1" height="1"/><rect x="9" y="0" width="1" height="1"/><rect x="0" y="3" width="1" height="1"/><rect x="3" y="3" width="1" height="1"/><rect x="6" y="3" width="1" height="1"/><rect x="9" y="3" width="1" height="1"/></g></svg>
<div class="a" style="left:1731px;top:492px;width:141px;height:60px;background:#fff;border:1px solid #c4c4c4;border-radius:5px 0 0 5px"></div><div class="a" style="left:1732px;top:511px;width:139px;height:1px;background:#c4c4c4"></div><div class="a" style="left:1732px;top:531px;width:139px;height:1px;background:#c4c4c4"></div><span class="t" style="left:1731px;width:141px;text-align:center;top:496.5px;color:#222">0 m</span><span class="t" style="right:198px;top:496.5px;color:#111">Положение X</span><svg class="a" style="left:1873px;top:496px" width="16" height="12" viewBox="0 0 16 12"><path d="M1 3.5a3.5 3.5 0 0 1 6.5-0.5v2.5" fill="none" stroke="#555" stroke-width="1"/><rect x="5.5" y="5.5" width="8.5" height="5.5" fill="none" stroke="#555" stroke-width="1"/><rect x="9.2" y="7.6" width="1.2" height="1.5" fill="#555"/></svg><div class="a" style="left:1900px;top:500.0px;width:4.5px;height:4.5px;border-radius:50%;background:#333"></div><span class="t" style="left:1731px;width:141px;text-align:center;top:516.2px;color:#222">0 m</span><span class="t" style="right:198px;top:516.2px;color:#111">Y</span><svg class="a" style="left:1873px;top:515px" width="16" height="12" viewBox="0 0 16 12"><path d="M1 3.5a3.5 3.5 0 0 1 6.5-0.5v2.5" fill="none" stroke="#555" stroke-width="1"/><rect x="5.5" y="5.5" width="8.5" height="5.5" fill="none" stroke="#555" stroke-width="1"/><rect x="9.2" y="7.6" width="1.2" height="1.5" fill="#555"/></svg><div class="a" style="left:1900px;top:519.7px;width:4.5px;height:4.5px;border-radius:50%;background:#333"></div><span class="t" style="left:1731px;width:141px;text-align:center;top:535.9px;color:#222">0 m</span><span class="t" style="right:198px;top:535.9px;color:#111">Z</span><svg class="a" style="left:1873px;top:535px" width="16" height="12" viewBox="0 0 16 12"><path d="M1 3.5a3.5 3.5 0 0 1 6.5-0.5v2.5" fill="none" stroke="#555" stroke-width="1"/><rect x="5.5" y="5.5" width="8.5" height="5.5" fill="none" stroke="#555" stroke-width="1"/><rect x="9.2" y="7.6" width="1.2" height="1.5" fill="#555"/></svg><div class="a" style="left:1900px;top:539.4px;width:4.5px;height:4.5px;border-radius:50%;background:#333"></div><div class="a" style="left:1731px;top:557px;width:141px;height:60px;background:#fff;border:1px solid #c4c4c4;border-radius:5px 0 0 5px"></div><div class="a" style="left:1732px;top:576px;width:139px;height:1px;background:#c4c4c4"></div><div class="a" style="left:1732px;top:596px;width:139px;height:1px;background:#c4c4c4"></div><span class="t" style="left:1731px;width:141px;text-align:center;top:561.5px;color:#222">0°</span><span class="t" style="right:198px;top:561.5px;color:#111">Вращение X</span><svg class="a" style="left:1873px;top:561px" width="16" height="12" viewBox="0 0 16 12"><path d="M1 3.5a3.5 3.5 0 0 1 6.5-0.5v2.5" fill="none" stroke="#555" stroke-width="1"/><rect x="5.5" y="5.5" width="8.5" height="5.5" fill="none" stroke="#555" stroke-width="1"/><rect x="9.2" y="7.6" width="1.2" height="1.5" fill="#555"/></svg><div class="a" style="left:1900px;top:565.0px;width:4.5px;height:4.5px;border-radius:50%;background:#333"></div><span class="t" style="left:1731px;width:141px;text-align:center;top:581.2px;color:#222">0°</span><span class="t" style="right:198px;top:581.2px;color:#111">Y</span><svg class="a" style="left:1873px;top:580px" width="16" height="12" viewBox="0 0 16 12"><path d="M1 3.5a3.5 3.5 0 0 1 6.5-0.5v2.5" fill="none" stroke="#555" stroke-width="1"/><rect x="5.5" y="5.5" width="8.5" height="5.5" fill="none" stroke="#555" stroke-width="1"/><rect x="9.2" y="7.6" width="1.2" height="1.5" fill="#555"/></svg><div class="a" style="left:1900px;top:584.7px;width:4.5px;height:4.5px;border-radius:50%;background:#333"></div><span class="t" style="left:1731px;width:141px;text-align:center;top:600.9px;color:#222">0°</span><span class="t" style="right:198px;top:600.9px;color:#111">Z</span><svg class="a" style="left:1873px;top:600px" width="16" height="12" viewBox="0 0 16 12"><path d="M1 3.5a3.5 3.5 0 0 1 6.5-0.5v2.5" fill="none" stroke="#555" stroke-width="1"/><rect x="5.5" y="5.5" width="8.5" height="5.5" fill="none" stroke="#555" stroke-width="1"/><rect x="9.2" y="7.6" width="1.2" height="1.5" fill="#555"/></svg><div class="a" style="left:1900px;top:604.4px;width:4.5px;height:4.5px;border-radius:50%;background:#333"></div><div class="a" style="left:1731px;top:622px;width:141px;height:20px;background:#fff;border:1px solid #c4c4c4;border-radius:5px"></div><span class="t" style="left:1739px;top:626.5px;color:#222">XYZ Эйлер</span><svg class="chev" style="left:1858px;top:629px" width="9" height="6" viewBox="0 0 9 6"><path d="M1 1l3.5 3.5l3.5-3.5" fill="none" stroke="#111" stroke-width="1.3"/></svg><span class="t" style="right:198px;top:626.5px;color:#111">Режим</span><div class="a" style="left:1900px;top:630px;width:4.5px;height:4.5px;border-radius:50%;background:#333"></div><div class="a" style="left:1731px;top:647px;width:141px;height:60px;background:#fff;border:1px solid #c4c4c4;border-radius:5px 0 0 5px"></div><div class="a" style="left:1732px;top:666px;width:139px;height:1px;background:#c4c4c4"></div><div class="a" style="left:1732px;top:686px;width:139px;height:1px;background:#c4c4c4"></div><span class="t" style="left:1731px;width:141px;text-align:center;top:651.5px;color:#222">1.000</span><span class="t" style="right:198px;top:651.5px;color:#111">Масштаб X</span><svg class="a" style="left:1873px;top:651px" width="16" height="12" viewBox="0 0 16 12"><path d="M1 3.5a3.5 3.5 0 0 1 6.5-0.5v2.5" fill="none" stroke="#555" stroke-width="1"/><rect x="5.5" y="5.5" width="8.5" height="5.5" fill="none" stroke="#555" stroke-width="1"/><rect x="9.2" y="7.6" width="1.2" height="1.5" fill="#555"/></svg><div class="a" style="left:1900px;top:655.0px;width:4.5px;height:4.5px;border-radius:50%;background:#333"></div><span class="t" style="left:1731px;width:141px;text-align:center;top:671.2px;color:#222">1.000</span><span class="t" style="right:198px;top:671.2px;color:#111">Y</span><svg class="a" style="left:1873px;top:670px" width="16" height="12" viewBox="0 0 16 12"><path d="M1 3.5a3.5 3.5 0 0 1 6.5-0.5v2.5" fill="none" stroke="#555" stroke-width="1"/><rect x="5.5" y="5.5" width="8.5" height="5.5" fill="none" stroke="#555" stroke-width="1"/><rect x="9.2" y="7.6" width="1.2" height="1.5" fill="#555"/></svg><div class="a" style="left:1900px;top:674.7px;width:4.5px;height:4.5px;border-radius:50%;background:#333"></div><span class="t" style="left:1731px;width:141px;text-align:center;top:690.9px;color:#222">1.000</span><span class="t" style="right:198px;top:690.9px;color:#111">Z</span><svg class="a" style="left:1873px;top:690px" width="16" height="12" viewBox="0 0 16 12"><path d="M1 3.5a3.5 3.5 0 0 1 6.5-0.5v2.5" fill="none" stroke="#555" stroke-width="1"/><rect x="5.5" y="5.5" width="8.5" height="5.5" fill="none" stroke="#555" stroke-width="1"/><rect x="9.2" y="7.6" width="1.2" height="1.5" fill="#555"/></svg><div class="a" style="left:1900px;top:694.4px;width:4.5px;height:4.5px;border-radius:50%;background:#333"></div>
<svg class="a" style="left:1641px;top:724px" width="6" height="7" viewBox="0 0 6 7"><path d="M0.3 0.3v6.4L5.8 3.5z" fill="#333"/></svg>
<span class="t" style="left:1652px;top:722px;font-size:11.5px;color:#111">Дельта-трансформация</span>
<svg class="a" style="left:1625px;top:748.0px" width="6" height="7" viewBox="0 0 6 7"><path d="M0.3 0.3v6.4L5.8 3.5z" fill="#555"/></svg><span class="t" style="left:1638px;top:746.5px;font-size:12.4px;color:#111">Отношения</span><svg class="a" style="left:1902px;top:749px" width="10" height="5" viewBox="0 0 10 5"><g fill="#b0b0b0"><rect x="0" y="0" width="1" height="1"/><rect x="3" y="0" width="1" height="1"/><rect x="6" y="0" width="1" height="1"/><rect x="9" y="0" width="1" height="1"/><rect x="0" y="3" width="1" height="1"/><rect x="3" y="3" width="1" height="1"/><rect x="6" y="3" width="1" height="1"/><rect x="9" y="3" width="1" height="1"/></g></svg><svg class="a" style="left:1625px;top:772.0px" width="6" height="7" viewBox="0 0 6 7"><path d="M0.3 0.3v6.4L5.8 3.5z" fill="#555"/></svg><span class="t" style="left:1638px;top:770.5px;font-size:12.4px;color:#111">Коллекции</span><svg class="a" style="left:1902px;top:773px" width="10" height="5" viewBox="0 0 10 5"><g fill="#b0b0b0"><rect x="0" y="0" width="1" height="1"/><rect x="3" y="0" width="1" height="1"/><rect x="6" y="0" width="1" height="1"/><rect x="9" y="0" width="1" height="1"/><rect x="0" y="3" width="1" height="1"/><rect x="3" y="3" width="1" height="1"/><rect x="6" y="3" width="1" height="1"/><rect x="9" y="3" width="1" height="1"/></g></svg><svg class="a" style="left:1625px;top:796.0px" width="6" height="7" viewBox="0 0 6 7"><path d="M0.3 0.3v6.4L5.8 3.5z" fill="#555"/></svg><span class="t" style="left:1638px;top:794.5px;font-size:12.4px;color:#111">Создание экземпляров</span><svg class="a" style="left:1902px;top:797px" width="10" height="5" viewBox="0 0 10 5"><g fill="#b0b0b0"><rect x="0" y="0" width="1" height="1"/><rect x="3" y="0" width="1" height="1"/><rect x="6" y="0" width="1" height="1"/><rect x="9" y="0" width="1" height="1"/><rect x="0" y="3" width="1" height="1"/><rect x="3" y="3" width="1" height="1"/><rect x="6" y="3" width="1" height="1"/><rect x="9" y="3" width="1" height="1"/></g></svg><svg class="a" style="left:1625px;top:820.0px" width="6" height="7" viewBox="0 0 6 7"><path d="M0.3 0.3v6.4L5.8 3.5z" fill="#555"/></svg><span class="t" style="left:1638px;top:818.5px;font-size:12.4px;color:#111">Траектории движения</span><svg class="a" style="left:1902px;top:821px" width="10" height="5" viewBox="0 0 10 5"><g fill="#b0b0b0"><rect x="0" y="0" width="1" height="1"/><rect x="3" y="0" width="1" height="1"/><rect x="6" y="0" width="1" height="1"/><rect x="9" y="0" width="1" height="1"/><rect x="0" y="3" width="1" height="1"/><rect x="3" y="3" width="1" height="1"/><rect x="6" y="3" width="1" height="1"/><rect x="9" y="3" width="1" height="1"/></g></svg><svg class="a" style="left:1625px;top:844.0px" width="6" height="7" viewBox="0 0 6 7"><path d="M0.3 0.3v6.4L5.8 3.5z" fill="#555"/></svg><span class="t" style="left:1638px;top:842.5px;font-size:12.4px;color:#111">Видимость</span><svg class="a" style="left:1902px;top:845px" width="10" height="5" viewBox="0 0 10 5"><g fill="#b0b0b0"><rect x="0" y="0" width="1" height="1"/><rect x="3" y="0" width="1" height="1"/><rect x="6" y="0" width="1" height="1"/><rect x="9" y="0" width="1" height="1"/><rect x="0" y="3" width="1" height="1"/><rect x="3" y="3" width="1" height="1"/><rect x="6" y="3" width="1" height="1"/><rect x="9" y="3" width="1" height="1"/></g></svg><svg class="a" style="left:1625px;top:868.0px" width="6" height="7" viewBox="0 0 6 7"><path d="M0.3 0.3v6.4L5.8 3.5z" fill="#555"/></svg><span class="t" style="left:1638px;top:866.5px;font-size:12.4px;color:#111">Отображение во вьюпорте</span><svg class="a" style="left:1902px;top:869px" width="10" height="5" viewBox="0 0 10 5"><g fill="#b0b0b0"><rect x="0" y="0" width="1" height="1"/><rect x="3" y="0" width="1" height="1"/><rect x="6" y="0" width="1" height="1"/><rect x="9" y="0" width="1" height="1"/><rect x="0" y="3" width="1" height="1"/><rect x="3" y="3" width="1" height="1"/><rect x="6" y="3" width="1" height="1"/><rect x="9" y="3" width="1" height="1"/></g></svg><svg class="a" style="left:1625px;top:892.0px" width="6" height="7" viewBox="0 0 6 7"><path d="M0.3 0.3v6.4L5.8 3.5z" fill="#555"/></svg><span class="t" style="left:1638px;top:890.5px;font-size:12.4px;color:#111">Настраиваемые свойства</span><svg class="a" style="left:1902px;top:893px" width="10" height="5" viewBox="0 0 10 5"><g fill="#b0b0b0"><rect x="0" y="0" width="1" height="1"/><rect x="3" y="0" width="1" height="1"/><rect x="6" y="0" width="1" height="1"/><rect x="9" y="0" width="1" height="1"/><rect x="0" y="3" width="1" height="1"/><rect x="3" y="3" width="1" height="1"/><rect x="6" y="3" width="1" height="1"/><rect x="9" y="3" width="1" height="1"/></g></svg>
</div>
<div id="tl" class="a">
<div class="a" style="left:0;top:25px;width:1584px;height:47px;background:#fff"></div>
<div class="a" style="left:0;top:25px;width:53.1px;height:47px;background:#eeeeee"></div>
<div class="a" style="left:1526.4px;top:25px;width:200px;height:47px;background:#eeeeee"></div>
<div class="a" style="left:23.1px;top:25px;width:1px;height:47px;background:#dcdcdc"></div><div class="a" style="left:52.6px;top:25px;width:1px;height:47px;background:#dcdcdc"></div><div class="a" style="left:82.1px;top:25px;width:1px;height:47px;background:#dcdcdc"></div><div class="a" style="left:111.5px;top:25px;width:1px;height:47px;background:#dcdcdc"></div><div class="a" style="left:141.0px;top:25px;width:1px;height:47px;background:#dcdcdc"></div><div class="a" style="left:170.5px;top:25px;width:1px;height:47px;background:#dcdcdc"></div><div class="a" style="left:199.9px;top:25px;width:1px;height:47px;background:#dcdcdc"></div><div class="a" style="left:229.4px;top:25px;width:1px;height:47px;background:#dcdcdc"></div><div class="a" style="left:258.9px;top:25px;width:1px;height:47px;background:#dcdcdc"></div><div class="a" style="left:288.3px;top:25px;width:1px;height:47px;background:#dcdcdc"></div><div class="a" style="left:317.8px;top:25px;width:1px;height:47px;background:#dcdcdc"></div><div class="a" style="left:347.3px;top:25px;width:1px;height:47px;background:#dcdcdc"></div><div class="a" style="left:376.7px;top:25px;width:1px;height:47px;background:#dcdcdc"></div><div class="a" style="left:406.2px;top:25px;width:1px;height:47px;background:#dcdcdc"></div><div class="a" style="left:435.7px;top:25px;width:1px;height:47px;background:#dcdcdc"></div><div class="a" style="left:465.1px;top:25px;width:1px;height:47px;background:#dcdcdc"></div><div class="a" style="left:494.6px;top:25px;width:1px;height:47px;background:#dcdcdc"></div><div class="a" style="left:524.0px;top:25px;width:1px;height:47px;background:#dcdcdc"></div><div class="a" style="left:553.5px;top:25px;width:1px;height:47px;background:#dcdcdc"></div><div class="a" style="left:583.0px;top:25px;width:1px;height:47px;background:#dcdcdc"></div><div class="a" style="left:612.4px;top:25px;width:1px;height:47px;background:#dcdcdc"></div><div class="a" style="left:641.9px;top:25px;width:1px;height:47px;background:#dcdcdc"></div><div class="a" style="left:671.4px;top:25px;width:1px;height:47px;background:#dcdcdc"></div><div class="a" style="left:700.8px;top:25px;width:1px;height:47px;background:#dcdcdc"></div><div class="a" style="left:730.3px;top:25px;width:1px;height:47px;background:#dcdcdc"></div><div class="a" style="left:759.8px;top:25px;width:1px;height:47px;background:#dcdcdc"></div><div class="a" style="left:789.2px;top:25px;width:1px;height:47px;background:#dcdcdc"></div><div class="a" style="left:818.7px;top:25px;width:1px;height:47px;background:#dcdcdc"></div><div class="a" style="left:848.2px;top:25px;width:1px;height:47px;background:#dcdcdc"></div><div class="a" style="left:877.6px;top:25px;width:1px;height:47px;background:#dcdcdc"></div><div class="a" style="left:907.1px;top:25px;width:1px;height:47px;background:#dcdcdc"></div><div class="a" style="left:936.6px;top:25px;width:1px;height:47px;background:#dcdcdc"></div><div class="a" style="left:966.0px;top:25px;width:1px;height:47px;background:#dcdcdc"></div><div class="a" style="left:995.5px;top:25px;width:1px;height:47px;background:#dcdcdc"></div><div class="a" style="left:1025.0px;top:25px;width:1px;height:47px;background:#dcdcdc"></div><div class="a" style="left:1054.4px;top:25px;width:1px;height:47px;background:#dcdcdc"></div><div class="a" style="left:1083.9px;top:25px;width:1px;height:47px;background:#dcdcdc"></div><div class="a" style="left:1113.3px;top:25px;width:1px;height:47px;background:#dcdcdc"></div><div class="a" style="left:1142.8px;top:25px;width:1px;height:47px;background:#dcdcdc"></div><div class="a" style="left:1172.3px;top:25px;width:1px;height:47px;background:#dcdcdc"></div><div class="a" style="left:1201.7px;top:25px;width:1px;height:47px;background:#dcdcdc"></div><div class="a" style="left:1231.2px;top:25px;width:1px;height:47px;background:#dcdcdc"></div><div class="a" style="left:1260.7px;top:25px;width:1px;height:47px;background:#dcdcdc"></div><div class="a" style="left:1290.1px;top:25px;width:1px;height:47px;background:#dcdcdc"></div><div class="a" style="left:1319.6px;top:25px;width:1px;height:47px;background:#dcdcdc"></div><div class="a" style="left:1349.1px;top:25px;width:1px;height:47px;background:#dcdcdc"></div><div class="a" style="left:1378.5px;top:25px;width:1px;height:47px;background:#dcdcdc"></div><div class="a" style="left:1408.0px;top:25px;width:1px;height:47px;background:#dcdcdc"></div><div class="a" style="left:1437.5px;top:25px;width:1px;height:47px;background:#dcdcdc"></div><div class="a" style="left:1466.9px;top:25px;width:1px;height:47px;background:#dcdcdc"></div><div class="a" style="left:1496.4px;top:25px;width:1px;height:47px;background:#dcdcdc"></div><div class="a" style="left:1525.9px;top:25px;width:1px;height:47px;background:#dcdcdc"></div><div class="a" style="left:1555.3px;top:25px;width:1px;height:47px;background:#dcdcdc"></div>
<div class="a" style="left:0;top:25px;width:1584px;height:23px;background:#c4e2fa"></div>
<div class="a" style="left:23.1px;top:25px;width:1px;height:23px;background:#acd0ef"></div><div class="a" style="left:52.6px;top:25px;width:1px;height:23px;background:#acd0ef"></div><div class="a" style="left:82.1px;top:25px;width:1px;height:23px;background:#acd0ef"></div><div class="a" style="left:111.5px;top:25px;width:1px;height:23px;background:#acd0ef"></div><div class="a" style="left:141.0px;top:25px;width:1px;height:23px;background:#acd0ef"></div><div class="a" style="left:170.5px;top:25px;width:1px;height:23px;background:#acd0ef"></div><div class="a" style="left:199.9px;top:25px;width:1px;height:23px;background:#acd0ef"></div><div class="a" style="left:229.4px;top:25px;width:1px;height:23px;background:#acd0ef"></div><div class="a" style="left:258.9px;top:25px;width:1px;height:23px;background:#acd0ef"></div><div class="a" style="left:288.3px;top:25px;width:1px;height:23px;background:#acd0ef"></div><div class="a" style="left:317.8px;top:25px;width:1px;height:23px;background:#acd0ef"></div><div class="a" style="left:347.3px;top:25px;width:1px;height:23px;background:#acd0ef"></div><div class="a" style="left:376.7px;top:25px;width:1px;height:23px;background:#acd0ef"></div><div class="a" style="left:406.2px;top:25px;width:1px;height:23px;background:#acd0ef"></div><div class="a" style="left:435.7px;top:25px;width:1px;height:23px;background:#acd0ef"></div><div class="a" style="left:465.1px;top:25px;width:1px;height:23px;background:#acd0ef"></div><div class="a" style="left:494.6px;top:25px;width:1px;height:23px;background:#acd0ef"></div><div class="a" style="left:524.0px;top:25px;width:1px;height:23px;background:#acd0ef"></div><div class="a" style="left:553.5px;top:25px;width:1px;height:23px;background:#acd0ef"></div><div class="a" style="left:583.0px;top:25px;width:1px;height:23px;background:#acd0ef"></div><div class="a" style="left:612.4px;top:25px;width:1px;height:23px;background:#acd0ef"></div><div class="a" style="left:641.9px;top:25px;width:1px;height:23px;background:#acd0ef"></div><div class="a" style="left:671.4px;top:25px;width:1px;height:23px;background:#acd0ef"></div><div class="a" style="left:700.8px;top:25px;width:1px;height:23px;background:#acd0ef"></div><div class="a" style="left:730.3px;top:25px;width:1px;height:23px;background:#acd0ef"></div><div class="a" style="left:759.8px;top:25px;width:1px;height:23px;background:#acd0ef"></div><div class="a" style="left:789.2px;top:25px;width:1px;height:23px;background:#acd0ef"></div><div class="a" style="left:818.7px;top:25px;width:1px;height:23px;background:#acd0ef"></div><div class="a" style="left:848.2px;top:25px;width:1px;height:23px;background:#acd0ef"></div><div class="a" style="left:877.6px;top:25px;width:1px;height:23px;background:#acd0ef"></div><div class="a" style="left:907.1px;top:25px;width:1px;height:23px;background:#acd0ef"></div><div class="a" style="left:936.6px;top:25px;width:1px;height:23px;background:#acd0ef"></div><div class="a" style="left:966.0px;top:25px;width:1px;height:23px;background:#acd0ef"></div><div class="a" style="left:995.5px;top:25px;width:1px;height:23px;background:#acd0ef"></div><div class="a" style="left:1025.0px;top:25px;width:1px;height:23px;background:#acd0ef"></div><div class="a" style="left:1054.4px;top:25px;width:1px;height:23px;background:#acd0ef"></div><div class="a" style="left:1083.9px;top:25px;width:1px;height:23px;background:#acd0ef"></div><div class="a" style="left:1113.3px;top:25px;width:1px;height:23px;background:#acd0ef"></div><div class="a" style="left:1142.8px;top:25px;width:1px;height:23px;background:#acd0ef"></div><div class="a" style="left:1172.3px;top:25px;width:1px;height:23px;background:#acd0ef"></div><div class="a" style="left:1201.7px;top:25px;width:1px;height:23px;background:#acd0ef"></div><div class="a" style="left:1231.2px;top:25px;width:1px;height:23px;background:#acd0ef"></div><div class="a" style="left:1260.7px;top:25px;width:1px;height:23px;background:#acd0ef"></div><div class="a" style="left:1290.1px;top:25px;width:1px;height:23px;background:#acd0ef"></div><div class="a" style="left:1319.6px;top:25px;width:1px;height:23px;background:#acd0ef"></div><div class="a" style="left:1349.1px;top:25px;width:1px;height:23px;background:#acd0ef"></div><div class="a" style="left:1378.5px;top:25px;width:1px;height:23px;background:#acd0ef"></div><div class="a" style="left:1408.0px;top:25px;width:1px;height:23px;background:#acd0ef"></div><div class="a" style="left:1437.5px;top:25px;width:1px;height:23px;background:#acd0ef"></div><div class="a" style="left:1466.9px;top:25px;width:1px;height:23px;background:#acd0ef"></div><div class="a" style="left:1496.4px;top:25px;width:1px;height:23px;background:#acd0ef"></div><div class="a" style="left:1525.9px;top:25px;width:1px;height:23px;background:#acd0ef"></div><div class="a" style="left:1555.3px;top:25px;width:1px;height:23px;background:#acd0ef"></div>
<div class="a" style="left:7px;top:60px;width:1570px;height:11px;background:#fff;border:1.5px solid #8a8a8a;border-radius:6px"></div>
<div class="a" style="left:10px;top:62.5px;width:6px;height:6px;background:#d0d0d0;border-radius:50%"></div>
<div class="a" style="left:-4px;top:40px;width:11px;height:14px;background:#9fb2c3;border-radius:4px"></div>
<div class="a" style="left:1576px;top:40px;width:11px;height:14px;background:#9fb2c3;border-radius:4px"></div>
</div>
<div id="tlc">
<div class="btn" style="left:9px;top:950px;width:31px;height:20px"></div>
<svg class="a" style="left:12px;top:952px" width="26" height="16" viewBox="0 0 26 16"><circle cx="8" cy="8" r="7" fill="#222"/><path d="M9.5 4.5L6.5 8l3 3.5" fill="none" stroke="#fff" stroke-width="1.8"/><path d="M18 6.5l3 3l3-3" fill="none" stroke="#111" stroke-width="1.3"/></svg>
<div class="btn" style="left:45px;top:950px;width:177px;height:20px"></div>
<div class="a" style="left:164px;top:951px;width:1px;height:18px;background:#dedede"></div>
<span class="gt" style="left:53px;top:955px">Воспроизведение</span>
<svg class="chev" style="left:154px;top:958px" width="9" height="6" viewBox="0 0 9 6"><path d="M1 1l3.5 3.5l3.5-3.5" fill="none" stroke="#111" stroke-width="1.3"/></svg>
<span class="gt" style="left:172px;top:955px">Кеинг</span>
<svg class="chev" style="left:211px;top:958px" width="9" height="6" viewBox="0 0 9 6"><path d="M1 1l3.5 3.5l3.5-3.5" fill="none" stroke="#111" stroke-width="1.3"/></svg>
<span class="gt" style="left:229px;top:955px">Вид</span>
<span class="gt" style="left:265px;top:955px">Маркер</span>
<div class="btn" style="left:701px;top:950px;width:38px;height:20px"></div>
<div class="a" style="left:720px;top:951px;width:1px;height:18px;background:#e6e6e6"></div>
<div class="a" style="left:706px;top:955.5px;width:9px;height:9px;background:#333;border-radius:50%"></div>
<svg class="chev" style="left:725px;top:958px" width="9" height="6" viewBox="0 0 9 6"><path d="M1 1l3.5 3.5l3.5-3.5" fill="none" stroke="#999" stroke-width="1.1"/></svg>
<div class="a" style="left:745px;top:950px;width:120px;height:20px;background:#e6e6e6;border:1px solid #dcdcdc;border-radius:5px"></div>
<svg class="a" style="left:745px;top:950px" width="120" height="20" viewBox="0 0 120 20"><g fill="#d8d8d8"><rect x="19.5" y="1" width="1" height="18"/><rect x="39.5" y="1" width="1" height="18"/><rect x="59.5" y="1" width="1" height="18"/><rect x="79.5" y="1" width="1" height="18"/><rect x="99.5" y="1" width="1" height="18"/></g>
<g fill="#222"><rect x="5" y="4.5" width="2" height="10"/><path d="M14 4.5v10l-7-5z"/>
<path d="M21 9.5l4.6-4.6l4.6 4.6l-4.6 4.6z M36 5v9l-4.4-4.5z"/>
<path d="M53 4v11l-8-5.5z"/>
<path d="M66 4v11l8-5.5z"/>
<path d="M82 5v9l4.4-4.5z M87.8 9.5l4.6-4.6l4.6 4.6l-4.6 4.6z"/>
<path d="M106 4.5v10l7-5z"/><rect x="113" y="4.5" width="2" height="10"/></g></svg>
<div class="btn" style="left:1282px;top:950px;width:75px;height:20px"></div>
<span class="gt" style="left:1282px;width:75px;text-align:center;top:955px">1</span>
<div class="btn" style="left:1362px;top:950px;width:216px;height:20px"></div>
<div class="a" style="left:1381px;top:951px;width:1px;height:18px;background:#dedede"></div>
<div class="a" style="left:1481px;top:951px;width:1px;height:18px;background:#dedede"></div>
<svg class="a" style="left:1364px;top:952px" width="16" height="16" viewBox="0 0 16 16"><circle cx="7.5" cy="9" r="5.5" fill="none" stroke="#222" stroke-width="1.2"/><path d="M7.5 5.5v3.5h3M5.5 1.5h4M7.5 1.5v2M12 3.5l1.5-1.5" fill="none" stroke="#222" stroke-width="1.1"/></svg>
<span class="gt" style="left:1397.5px;top:955px">Начало</span>
<span class="gt" style="left:1461px;top:955px">1</span>
<span class="gt" style="left:1497px;top:955px">Конец</span>
<span class="gt" style="left:1543px;top:955px">250</span>
<div class="a" style="left:46px;top:975px;width:25px;height:17px;background:#1b74e4;border-radius:4px"></div>
<div class="a" style="left:58px;top:991px;width:2px;height:29px;background:#1b74e4"></div>
<span class="t" style="left:46px;width:25px;text-align:center;top:978px;color:#111">1</span>
<span class="t" style="left:80.5px;width:60px;text-align:center;top:978.5px;color:#222">10</span><span class="t" style="left:139.5px;width:60px;text-align:center;top:978.5px;color:#222">20</span><span class="t" style="left:198.4px;width:60px;text-align:center;top:978.5px;color:#222">30</span><span class="t" style="left:257.3px;width:60px;text-align:center;top:978.5px;color:#222">40</span><span class="t" style="left:316.3px;width:60px;text-align:center;top:978.5px;color:#222">50</span><span class="t" style="left:375.2px;width:60px;text-align:center;top:978.5px;color:#222">60</span><span class="t" style="left:434.1px;width:60px;text-align:center;top:978.5px;color:#222">70</span><span class="t" style="left:493.0px;width:60px;text-align:center;top:978.5px;color:#222">80</span><span class="t" style="left:552.0px;width:60px;text-align:center;top:978.5px;color:#222">90</span><span class="t" style="left:610.9px;width:60px;text-align:center;top:978.5px;color:#222">100</span><span class="t" style="left:669.8px;width:60px;text-align:center;top:978.5px;color:#222">110</span><span class="t" style="left:728.8px;width:60px;text-align:center;top:978.5px;color:#222">120</span><span class="t" style="left:787.7px;width:60px;text-align:center;top:978.5px;color:#222">130</span><span class="t" style="left:846.6px;width:60px;text-align:center;top:978.5px;color:#222">140</span><span class="t" style="left:905.6px;width:60px;text-align:center;top:978.5px;color:#222">150</span><span class="t" style="left:964.5px;width:60px;text-align:center;top:978.5px;color:#222">160</span><span class="t" style="left:1023.4px;width:60px;text-align:center;top:978.5px;color:#222">170</span><span class="t" style="left:1082.3px;width:60px;text-align:center;top:978.5px;color:#222">180</span><span class="t" style="left:1141.3px;width:60px;text-align:center;top:978.5px;color:#222">190</span><span class="t" style="left:1200.2px;width:60px;text-align:center;top:978.5px;color:#222">200</span><span class="t" style="left:1259.1px;width:60px;text-align:center;top:978.5px;color:#222">210</span><span class="t" style="left:1318.1px;width:60px;text-align:center;top:978.5px;color:#222">220</span><span class="t" style="left:1377.0px;width:60px;text-align:center;top:978.5px;color:#222">230</span><span class="t" style="left:1435.9px;width:60px;text-align:center;top:978.5px;color:#222">240</span><span class="t" style="left:1494.9px;width:60px;text-align:center;top:978.5px;color:#222">250</span>
</div>
<div id="status" class="a"></div>
<div id="statc">
<span class="t" style="left:1871px;top:1025.5px;color:#222">2.91.0</span>
<svg class="a" style="left:11px;top:1023px" width="13" height="16" viewBox="0 0 13 16"><rect x="1" y="1" width="10.5" height="14" rx="4" fill="none" stroke="#222" stroke-width="1.1"/><path d="M1 6h5.25V1H5a4 4 0 0 0-4 4z" fill="#222"/></svg>
<span class="t" style="left:35px;top:1024.5px;color:#333">Выделить</span>
<svg class="a" style="left:98px;top:1023px" width="18" height="16" viewBox="0 0 18 16"><rect x="1" y="1" width="10.5" height="14" rx="4" fill="none" stroke="#222" stroke-width="1.1"/><path d="M1 6h5.25V1H5a4 4 0 0 0-4 4z" fill="#222"/><path d="M14 2v6M16.5 1v6" stroke="#333" stroke-width="0.9"/></svg>
<span class="t" style="left:123px;top:1024.5px;color:#333">Прямоугольное выделение</span>
<svg class="a" style="left:286px;top:1023px" width="13" height="16" viewBox="0 0 13 16"><rect x="1" y="1" width="10.5" height="14" rx="4" fill="none" stroke="#222" stroke-width="1.1"/><rect x="5.2" y="3.5" width="2" height="4" rx="1" fill="#222"/></svg>
<span class="t" style="left:309px;top:1024.5px;color:#333">Повернуть вид</span>
<svg class="a" style="left:523px;top:1023px" width="13" height="16" viewBox="0 0 13 16"><rect x="1" y="1" width="10.5" height="14" rx="4" fill="none" stroke="#222" stroke-width="1.1"/><path d="M11.5 6H6.25V1H7.5a4 4 0 0 1 4 4z" fill="#222"/></svg>
<span class="t" style="left:545px;top:1024.5px;color:#333">Контекстное меню объектов</span>
</div>

<div class="a" style="left:1px;top:50px;width:1584px;height:23px;background:#fff;border-radius:6px 6px 0 0"></div>
<div id="vphdr">
<div class="btn" style="left:8px;top:53px;width:32px;height:20px"></div>
<svg class="a" style="left:11px;top:55px" width="27" height="16" viewBox="0 0 27 16"><path d="M3 7h5.8M2 11.2h13.8M6.2 5l-1.8 9.6M12.7 9.4l0.8 5.2" stroke="#444" stroke-width="1.2" fill="none"/><circle cx="12.4" cy="4.2" r="3.4" fill="#2a2a2a"/><circle cx="11.4" cy="3.2" r="1" fill="#999"/><path d="M19 7l3.3 3.3l3.3-3.3" fill="none" stroke="#111" stroke-width="1.3"/></svg>
<svg class="a" style="left:52px;top:52px" width="22" height="22" viewBox="0 0 22 22"><rect x="0.8" y="0.8" width="20.4" height="20.4" fill="none" stroke="#e29a3a" stroke-width="1.3" stroke-dasharray="3.5 2.5"/><path d="M8 5.5v10.5l2.7-3.2 5.3 0z" fill="#1a1a1a"/></svg>
<div class="a" style="left:89px;top:54px;width:93px;height:18px;background:#f2f2f2;border-radius:4px"></div>
<div class="a" style="left:89px;top:54px;width:18px;height:18px;background:#3d9cf0;border-radius:4px 0 0 4px"></div>
<svg class="a" style="left:89px;top:54px" width="93" height="18" viewBox="0 0 93 18"><rect x="2.6" y="2.6" width="12.8" height="12.6" rx="1.5" fill="none" stroke="#fff" stroke-width="1.2" stroke-dasharray="2.2 1.8"/>
<path d="M25.4 2.1h9.4v9.5h-4.2v4.2h-9.3v-9.6h4.1z" fill="#555"/>
<path d="M44.2 2.1h9.6v9.5h-3.9v-5.4h-5.7z" fill="#555"/><rect x="40.6" y="6.8" width="8.7" height="8.4" rx="1" fill="none" stroke="#444" stroke-width="1.1" stroke-dasharray="1.8 1.6"/>
<path d="M63.2 2.1h9.6v9.5h-4.1v4.2H59v-9.6h4.2z M63.2 6.2v5.4h5.5v-5.4z" fill="#555" fill-rule="evenodd"/>
<rect x="78.6" y="2.7" width="12.6" height="12.5" rx="1.2" fill="none" stroke="#444" stroke-width="1.1" stroke-dasharray="2 1.7"/><rect x="82.2" y="6.2" width="5.5" height="5.4" fill="#555"/></svg>

<div class="btn" style="left:667px;top:53px;width:80px;height:20px"></div>
<svg class="a" style="left:671px;top:55px" width="20" height="16" viewBox="0 0 20 16"><path d="M4 13V2M2 4l2-2.5l2 2.5M4 13h12M14 11l2.5 2l-2.5 2" fill="none" stroke="#333" stroke-width="1"/><path d="M7 9l4-4M9 5h2v2" fill="none" stroke="#555" stroke-width="1"/></svg>
<span class="gt" style="left:693px;top:58px">Глоба...</span>
<svg class="chev" style="left:735px;top:61px" width="9" height="6" viewBox="0 0 9 6"><path d="M1 1l3.5 3.5l3.5-3.5" fill="none" stroke="#111" stroke-width="1.3"/></svg>
<div class="btn" style="left:752px;top:53px;width:32px;height:20px"></div>
<svg class="a" style="left:755px;top:55px" width="27" height="16" viewBox="0 0 27 16"><path d="M6.2 4.8A4.6 4.6 0 1 1 11.2 10.6" fill="none" stroke="#222" stroke-width="1.3"/><path d="M9.4 12.2A4.2 4.2 0 1 1 3.6 6.8" fill="none" stroke="#222" stroke-width="1.3"/><circle cx="7.8" cy="8.4" r="1.5" fill="#222"/><path d="M18 6.5l3 3l3-3" fill="none" stroke="#111" stroke-width="1.3"/></svg>
<div class="btn" style="left:789px;top:53px;width:52px;height:20px"></div>
<div class="a" style="left:808px;top:54px;width:1px;height:18px;background:#dedede"></div>
<svg class="a" style="left:791px;top:55px" width="48" height="16" viewBox="0 0 48 16"><g transform="rotate(45 8 8.5)"><path d="M3 13V8a5 5 0 0 1 10 0v5h-3V8a2 2 0 0 0-4 0v5z" fill="none" stroke="#555" stroke-width="1.1" stroke-linejoin="round"/></g><path d="M20.3 7.2v6.6M26.3 7.2v6.6M32.3 7.2v6.6M20.3 10.6h12M23.3 9v3M29.3 9v3" fill="none" stroke="#555" stroke-width="1"/><rect x="30.2" y="1.3" width="3.6" height="3.4" fill="#222"/><path d="M38 6.5l3 3l3-3" fill="none" stroke="#111" stroke-width="1.3"/></svg>
<div class="btn" style="left:846px;top:53px;width:51px;height:20px"></div>
<div class="a" style="left:865px;top:54px;width:1px;height:18px;background:#dedede"></div>
<svg class="a" style="left:848px;top:55px" width="48" height="16" viewBox="0 0 48 16"><circle cx="8" cy="8" r="5.8" fill="none" stroke="#aaa" stroke-width="1"/><circle cx="8" cy="8" r="2" fill="#999"/><path d="M20 14c3 0 3.5-11 6-11s3 11 6 11" fill="none" stroke="#aaa" stroke-width="1"/><path d="M38 6.5l3 3l3-3" fill="none" stroke="#999" stroke-width="1.3"/></svg>
<div class="btn" style="left:1518px;top:53px;width:61px;height:20px"></div>
<span class="gt" style="left:1527px;top:58.5px">Опции</span>
<svg class="chev" style="left:1566px;top:61px" width="9" height="6" viewBox="0 0 9 6"><path d="M1 1l3.5 3.5l3.5-3.5" fill="none" stroke="#111" stroke-width="1.3"/></svg>

<div class="btn" style="left:9px;top:78px;width:110px;height:20px"></div>
<svg class="a" style="left:14px;top:81px" width="14" height="14" viewBox="0 0 14 14"><path d="M0.5 3.5v-3h3M10.5 0.5h3v3M13.5 10.5v3h-3M3.5 13.5h-3v-3" fill="none" stroke="#444" stroke-width="1"/><rect x="3" y="3" width="8" height="8" fill="#333"/></svg>
<span class="gt" style="left:35px;top:83px">Объектный ...</span>
<svg class="chev" style="left:106px;top:86px" width="9" height="6" viewBox="0 0 9 6"><path d="M1 1l3.5 3.5l3.5-3.5" fill="none" stroke="#111" stroke-width="1.3"/></svg>
<span class="gt" style="left:131px;top:83px">Вид</span>
<span class="gt" style="left:167px;top:83px">Выделение</span>
<span class="gt" style="left:243px;top:83px">Добавить</span>
<span class="gt" style="left:309px;top:82px;font-size:12px;color:#333">Объект</span>

<div class="btn" style="left:1330px;top:78px;width:32px;height:20px"></div>
<svg class="a" style="left:1333px;top:80px" width="27" height="16" viewBox="0 0 27 16"><path d="M5 6.5c2-3 6-3 8 0c-2 3-6 3-8 0z" fill="none" stroke="#222" stroke-width="1.2"/><circle cx="9" cy="6.5" r="1.5" fill="#222"/><path d="M2 8l7 3l-3 1.5l-1.5 3z" fill="#222"/><path d="M18 6.5l3 3l3-3" fill="none" stroke="#111" stroke-width="1.3"/></svg>
<div class="btn" style="left:1367px;top:78px;width:39px;height:20px"></div>
<div class="a" style="left:1367px;top:78px;width:19px;height:20px;background:#3d9cf0;border-radius:5px 0 0 5px"></div>
<svg class="a" style="left:1368px;top:80px" width="37" height="16" viewBox="0 0 37 16"><path d="M3.5 6.5c3-3 7-3 10 1.5" fill="none" stroke="#fff" stroke-width="1"/><path d="M5 12l8-8M10 4h3v3" fill="none" stroke="#fff" stroke-width="1"/><circle cx="4.5" cy="12.5" r="1.6" fill="none" stroke="#fff" stroke-width="1"/><path d="M12 10a7 7 0 0 1 1.5 4" fill="none" stroke="#fff" stroke-width="1"/><path d="M25 6.5l3 3l3-3" fill="none" stroke="#111" stroke-width="1.3"/></svg>
<div class="btn" style="left:1413px;top:78px;width:39px;height:20px"></div>
<div class="a" style="left:1413px;top:78px;width:19px;height:20px;background:#3d9cf0;border-radius:5px 0 0 5px"></div>
<svg class="a" style="left:1414px;top:80px" width="37" height="16" viewBox="0 0 37 16"><circle cx="10.5" cy="6" r="4.5" fill="#ddd"/><path d="M7 7.5a4.5 4.5 0 1 0 5 4.5" fill="none" stroke="#fff" stroke-width="1.2"/><path d="M25 6.5l3 3l3-3" fill="none" stroke="#111" stroke-width="1.3"/></svg>
<div class="a" style="left:1457px;top:78px;width:20px;height:20px;background:#e2e2e2;border-radius:5px"></div>
<svg class="a" style="left:1459px;top:80px" width="16" height="16" viewBox="0 0 16 16"><rect x="2.5" y="5.5" width="8" height="8" fill="none" stroke="#333" stroke-width="1.1"/><path d="M5.5 5.5v-3h8v8h-3" fill="none" stroke="#333" stroke-width="1.1"/><path d="M5.5 8v2.5h2.5" fill="none" stroke="#333" stroke-width="1"/></svg>
<div class="a" style="left:1483px;top:78px;width:96px;height:20px;background:#ececec;border-radius:5px"></div>
<div class="a" style="left:1502px;top:78px;width:18px;height:20px;background:#3d9cf0"></div>
<div class="btn" style="left:1558px;top:78px;width:21px;height:20px;border-radius:0 5px 5px 0"></div>
<svg class="a" style="left:1483px;top:80px" width="96" height="16" viewBox="0 0 96 16"><circle cx="9.5" cy="8" r="6" fill="none" stroke="#444" stroke-width="1.1"/><ellipse cx="9.5" cy="8" rx="2.8" ry="6" fill="none" stroke="#444" stroke-width="1"/><path d="M3.5 8h12" stroke="#444" stroke-width="1"/>
<circle cx="28" cy="8" r="6.3" fill="#fff"/>
<circle cx="47" cy="8" r="6" fill="none" stroke="#444" stroke-width="1.1"/><path d="M47 2a6 6 0 0 0 0 12z" fill="#555"/><path d="M47 8h6a6 6 0 0 1 -6 6z" fill="#666"/>
<circle cx="66" cy="8" r="6" fill="none" stroke="#444" stroke-width="1.1"/><path d="M62 7a4 4 0 0 1 4-3.5" fill="none" stroke="#444" stroke-width="1.2"/>
<path d="M81 6.5l3 3l3-3" fill="none" stroke="#111" stroke-width="1.3"/></svg>
</div>
<div id="toolbar">
<div class="btn" style="left:8.5px;top:109.5px;width:41px;height:69.5px;border-radius:7px;overflow:hidden;border-color:#d0d0d0"><div class="a" style="left:0;top:0;width:40px;height:33.5px;background:#3d9cf0"></div><div class="a" style="left:0;top:33.5px;width:40px;height:1px;background:#d4d4d4"></div></div>
<div class="btn" style="left:8.5px;top:184px;width:41px;height:140px;border-radius:7px;overflow:hidden;border-color:#d0d0d0"><div class="a" style="left:0;top:33.5px;width:40px;height:1px;background:#d4d4d4"></div><div class="a" style="left:0;top:68.5px;width:40px;height:1px;background:#d4d4d4"></div><div class="a" style="left:0;top:103.5px;width:40px;height:1px;background:#d4d4d4"></div></div>
<div class="btn" style="left:8.5px;top:329px;width:41px;height:70px;border-radius:7px;overflow:hidden;border-color:#d0d0d0"><div class="a" style="left:0;top:34px;width:40px;height:1px;background:#d4d4d4"></div></div>
<svg class="a" style="left:0;top:100px" width="60" height="310" viewBox="0 100 60 310">
<rect x="17" y="116.8" width="22.2" height="20.4" rx="2.5" fill="none" stroke="#9a8f5a" stroke-width="1.7" stroke-dasharray="3 2.6"/>
<path d="M24.6 121.5v10.7l2.6-2.7l5.2-2.6z" fill="#111"/>
<path d="M47.2 137.8v3.3h-3.3z" fill="#111"/>
<circle cx="28" cy="160.8" r="11" fill="none" stroke="#111" stroke-width="1.6"/>
<circle cx="28" cy="160.8" r="11" fill="none" stroke="#e04040" stroke-width="1.6" stroke-dasharray="5 12.3" stroke-dashoffset="2"/>
<path d="M28 153.5v4.2M28 163.9v4.2M20.7 160.8h4.2M31.1 160.8h4.2" stroke="#888" stroke-width="1.5"/>
<path d="M28 190.5l-3.2 4h6.4z M28 213.3l-3.2-4h6.4z M16.5 202l4-3.2v6.4z M39.6 202l-4-3.2v6.4z" fill="#111"/>
<path d="M28 195.5v3.2M28 205.3v3.2M21.5 202h3.2M31.3 202h3.2" stroke="#111" stroke-width="1.8"/>
<path d="M20.5 233a9 9 0 0 1 13 -4M35.5 239a9 9 0 0 1 -13 6.5" fill="none" stroke="#111" stroke-width="1.3"/>
<path d="M16.5 234.5h6l-3 4.2z M33.6 237.5h6l-3-4.2z" fill="#111"/><path d="M28 231.8l4.2 4.2l-4.2 4.2l-4.2-4.2z" fill="#444"/>
<rect x="18.9" y="270.8" width="9" height="8.8" fill="#111"/><path d="M21 269v-5.6h15.4v15.4h-7" fill="none" stroke="#333" stroke-width="1.2"/><path d="M29 271l6-6M31.2 264.6h4.2v4.2" fill="none" stroke="#111" stroke-width="1.2"/>
<path d="M46.3 281.9v3.4h-3.4z" fill="#111"/>
<circle cx="28.2" cy="303.8" r="10" fill="none" stroke="#111" stroke-width="1.2" stroke-dasharray="5 2.8"/><rect x="23.5" y="299.1" width="9.4" height="9.4" fill="#111"/><path d="M28.2 291.5l-2.7 3.2h5.4z M28.2 316l-2.7-3.2h5.4z M16 303.8l3.2-2.7v5.4z M40.4 303.8l-3.2-2.7v5.4z" fill="#111"/>
<path d="M17 357l1.5-4.5l13.2-13.2l3 3l-13.2 13.2z" fill="#111"/><path d="M16.5 358.5c4-6 7-4 10-1.5s6 2.5 8.5-1.5" fill="none" stroke="#2a9d6a" stroke-width="1.3"/><path d="M47.2 360v3.3h-3.3z" fill="#111"/>
<path d="M20 370v22.5h19" fill="none" stroke="#111" stroke-width="2.2"/><path d="M17.5 370h5M20 374h3M20 378h3M20 382h3M20 386h3M24 390v2.5M28 390v2.5M32 390v2.5M36 390v2.5" stroke="#111" stroke-width="1"/><path d="M22.5 390.5V378.5a12 12 0 0 1 12 12z" fill="#1f8a46"/><path d="M23 377.5a13 13 0 0 1 13 13" fill="none" stroke="#1f8a46" stroke-width="0.9"/>
</svg>
</div>
<div id="ovl">
<span class="t" style="left:68px;top:112px;font-size:11.5px;color:#f6f6f6;text-shadow:1px 1px 1.5px #8a8a8a">Пользовательская перспектива</span>
<span class="t" style="left:68px;top:130px;font-size:11.5px;color:#f6f6f6;text-shadow:1px 1px 1.5px #8a8a8a">(1) Collection | Cube</span>
</div>
<svg class="a" style="left:1490px;top:105px" width="90" height="210" viewBox="1490 105 90 210">
<path d="M1535 152L1535 121" stroke="#1f72e6" stroke-width="2"/><path d="M1535 152L1565 145" stroke="#c4e99a" stroke-width="2"/><path d="M1535 152L1548 163" stroke="#d42020" stroke-width="2"/>
<circle cx="1522" cy="138" r="5.8" fill="#f78383"/><circle cx="1505.5" cy="157" r="5.8" fill="#7fde00"/><circle cx="1535.5" cy="179.5" r="5.8" fill="#7ab5f7"/>
<circle cx="1535" cy="121.5" r="7.5" fill="#1a7af0"/><circle cx="1565" cy="145" r="7.5" fill="#c4ef8c"/><circle cx="1548.5" cy="163.5" r="7.5" fill="#ee2222"/>
<text x="1535" y="125.5" font-size="11" text-anchor="middle" fill="#111" font-family="Liberation Sans">Z</text><text x="1565" y="149" font-size="11" text-anchor="middle" fill="#111" font-family="Liberation Sans">Y</text><text x="1548.5" y="167.5" font-size="11" text-anchor="middle" fill="#111" font-family="Liberation Sans">X</text>
<g fill="#8c8c8c" stroke="#8c8c8c">
<circle cx="1563.6" cy="204.4" r="6.3" stroke="none"/><path d="M1559.5 208.5L1555 213" stroke-width="1.8" stroke-linecap="round"/><path d="M1563.6 200.8v7.2M1560 204.4h7.2" stroke="#fff" stroke-width="1.4"/>
<path d="M1556.5 238.5l-2.5-3.2c0.8-1 1.8-0.8 2.6 0l1.4 1.6v-8a1.1 1.1 0 0 1 2.2 0v6v-7.2a1.1 1.1 0 0 1 2.2 0v7.2v-6.5a1.1 1.1 0 0 1 2.2 0v6.8l1.6-5a1.1 1.1 0 0 1 2.1 0.6l-2 7.5c-0.6 2.8-2.8 5.6-6 5.6c-2.2 0-3.2-1.2-3.8-2.4z" stroke="none"/>
<circle cx="1557.5" cy="263" r="3.8" stroke="none"/><circle cx="1564.5" cy="262.8" r="3.8" stroke="none"/><circle cx="1557.5" cy="263" r="1" fill="#fff" stroke="none"/><circle cx="1564.5" cy="262.8" r="1" fill="#fff" stroke="none"/><rect x="1557" y="268.5" width="8" height="6" stroke="none"/><rect x="1554" y="270.3" width="3" height="2.4" stroke="none"/><path d="M1566 271.5l3.5-2.6v5.2z" stroke="none"/>
<path d="M1557.5 291.5h9l3 12h-15z M1556.3 295.5h11.4M1555.2 299.5h13.6M1560.5 291.5l-1 12M1563.5 291.5l1 12" fill="none" stroke-width="1.3"/></g>
<rect x="1576" y="116" width="6" height="14" rx="3" fill="#c8c8c8"/>
</svg>
<svg class="a" style="left:0;top:0" width="400" height="100" viewBox="0 0 400 100"><path d="M348.4 62H353.1V96.9H348.4V69.6C345.8 71.9 343 73.6 339.8 74.8V70.8C343.4 69.2 346.4 66.3 348.4 62Z" fill="#e62139"/></svg>
<span class="ann red" style="left:387px;top:55px">2</span>
<span class="ann red" style="left:522px;top:55px">3</span>
<span class="ann red" style="left:601px;top:55px">4</span>
<span class="ann red" style="left:668px;top:55px">5</span>
<span class="ann grn" style="left:74px;top:231px">А</span>
<span class="ann grn" style="left:1254px;top:68px">Б</span>
<span class="ann grn" style="left:1434px;top:134px">В</span>
<span class="ann grn" style="left:1622px;top:193px">Г</span>
<span class="ann grn" style="left:1524px;top:584px;transform:scaleY(0.935);transform-origin:0 7px">Д</span>
</body></html>
